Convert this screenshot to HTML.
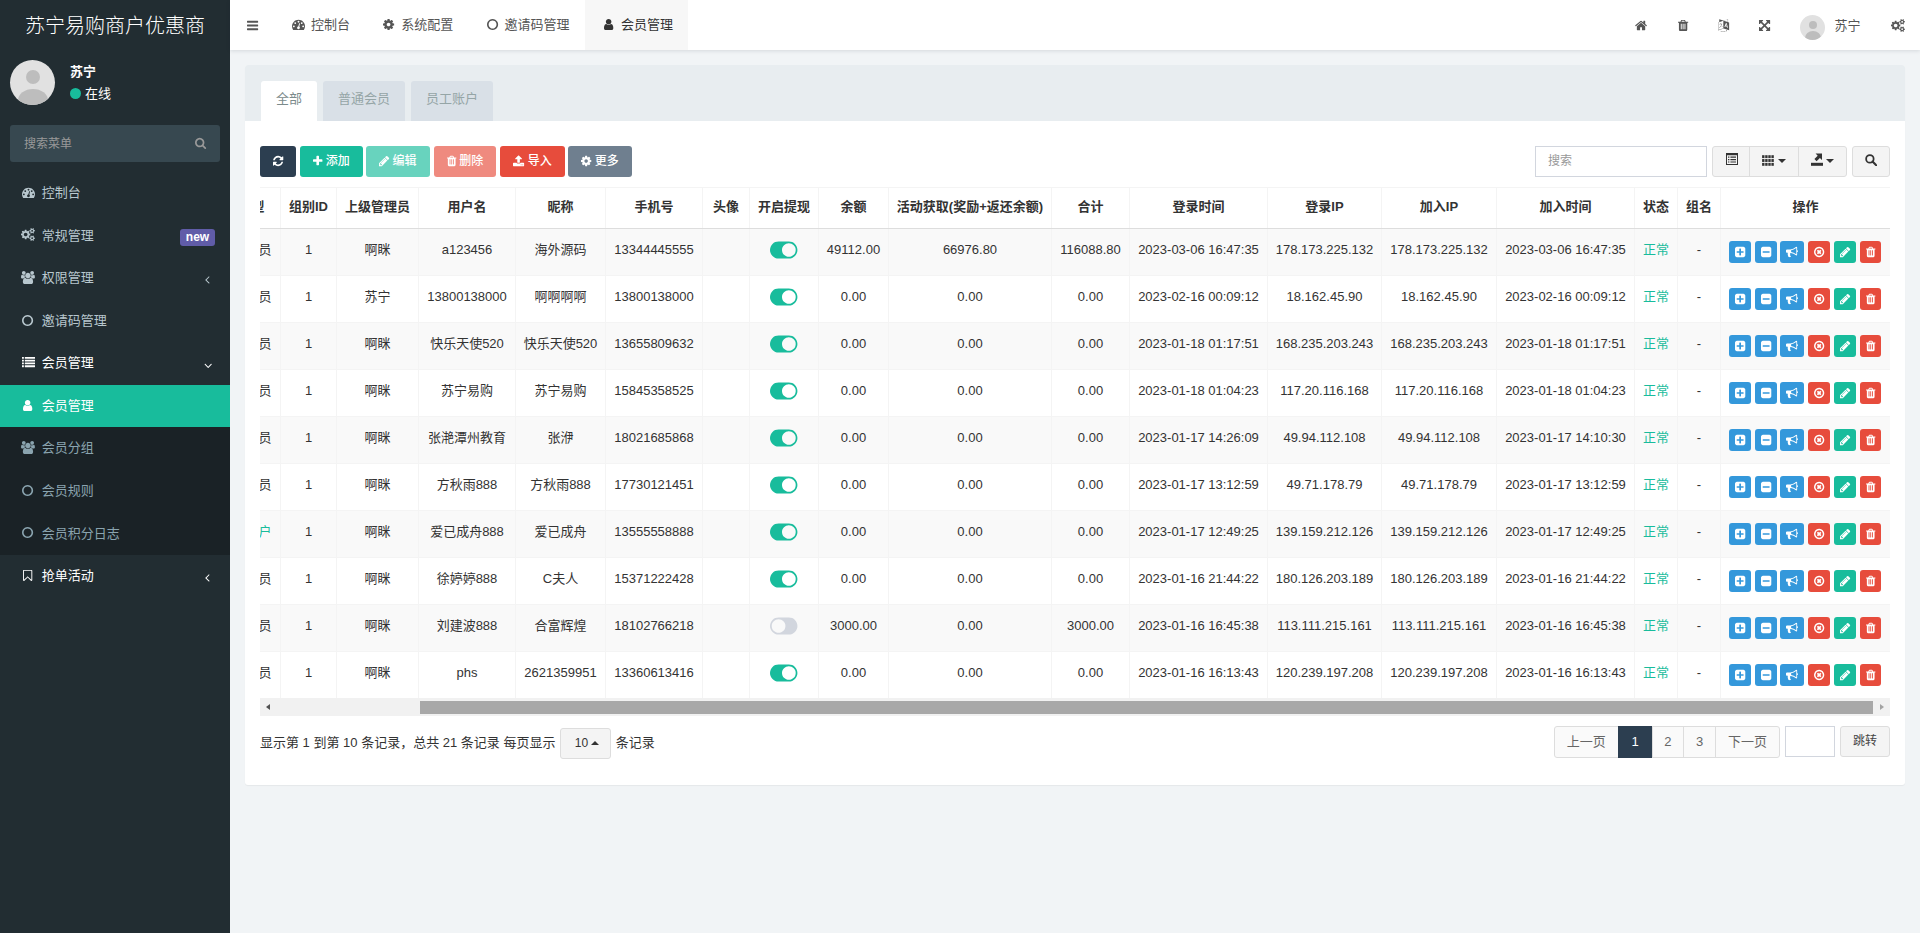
<!DOCTYPE html>
<html lang="zh-CN"><head><meta charset="utf-8"><title>会员管理</title>
<style>
*{box-sizing:border-box;margin:0;padding:0}
html,body{width:1920px;height:933px;overflow:hidden}
body{font-family:"Liberation Sans","Noto Sans CJK SC",sans-serif;font-size:13px;line-height:1.42857;color:#333;background:#f1f4f6;position:relative}
ul{list-style:none}
a{text-decoration:none;color:inherit}
svg.fa{display:inline-block;vertical-align:-0.143em;overflow:visible}
.fw{display:inline-block;text-align:center}
/* sidebar */
.sidebar{position:absolute;left:0;top:0;width:230px;height:933px;background:#222d32;color:#b8c7ce}
.logo{height:50px;line-height:52px;text-align:center;color:#fff;font-size:20px;font-weight:300;letter-spacing:0;white-space:nowrap}
.upanel{position:absolute;left:0;top:50px;width:230px;height:65px}
.avatar{position:absolute;border-radius:50%;background:#e1e1e1;overflow:hidden}
.avatar .hd{position:absolute;border-radius:50%;background:#bdbdbd}
.avatar .bd{position:absolute;border-radius:50%;background:#bdbdbd}
.av45{left:10px;top:10px;width:45px;height:45px}
.av45 .hd{left:15.5px;top:10.3px;width:14px;height:14px}
.av45 .bd{left:7.5px;top:28.6px;width:30px;height:23px}
.av25{left:1800px;top:15px;width:25px;height:25px}
.av25 .hd{left:8.5px;top:5.5px;width:8px;height:8px}
.av25 .bd{left:4.5px;top:15.5px;width:16px;height:14px}
.uname{position:absolute;left:70px;top:11.5px;color:#fff;font-weight:bold;font-size:13px;line-height:20px}
.ustat{position:absolute;left:70px;top:35px;color:#fff;font-size:13px;line-height:18px;padding-left:15px}
.ustat .dot{position:absolute;left:0;top:3px;width:11px;height:11px;border-radius:50%;background:#18bc9c}
.msearch{position:absolute;left:10px;top:125px;width:210px;height:37px;background:#374850;border-radius:3px}
.msearch .ph{position:absolute;left:14px;top:1px;line-height:37px;font-size:12px;color:#999}
.menu{position:absolute;left:0;top:172px;width:230px}
.mi{position:relative;height:42.57px;padding:12px 5px 12px 18px;line-height:18.57px;font-size:13px;white-space:nowrap;color:#b8c7ce}
.mi .fw{margin-right:0}
.mi .mt{margin-left:3.75px}
.mi.open,.mi.w{color:#fff}
.mi .pr{position:absolute;right:20px;top:14.5px}
.mi .pr.dn{right:17.8px;top:15px}
.sub{background:#1a2226}
.sub .mi{color:#8aa4af}
.sub .mi.active{background:#18bc9c;color:#fff}
.badge{position:absolute;left:180px;top:14px;height:17px;width:35px;background:#605ca8;color:#fff;font-weight:bold;font-size:12px;line-height:16px;text-align:center;border-radius:3px}
/* header */
.topbar{position:absolute;left:230px;top:0;width:1690px;height:50px;background:#fff;box-shadow:0 1px 4px rgba(0,21,41,.12)}
.topbar>*{position:absolute}
.burger{left:17px;top:0.6px;height:50px;display:flex;align-items:center}
.ntab{top:0;height:50px;line-height:50px;padding:0 15px;color:#555;white-space:nowrap;font-size:13px}
.ntab{margin-left:-230px}
.ntab .tt{margin-left:4px}
.ntab.active{background:#f7f7f7;color:#333}
.hi{top:0.4px;height:50px;display:flex;align-items:center;margin-left:-230px}
.topbar .av25{margin-left:-230px}
.hname{left:1604.5px;top:0.5px;line-height:50px;font-size:13px;color:#555}
/* panel */
.panel{position:absolute;left:245px;top:65px;width:1660px;height:720px;background:#fff;border-radius:3px;box-shadow:0 1px 1px rgba(0,0,0,.05)}
.phead{position:absolute;left:0;top:0;width:1660px;height:56px;background:#e8edf0;border-radius:3px 3px 0 0}
.ptab{position:absolute;top:16px;height:40px;line-height:36px;text-align:center;background:#d9e0e7;color:#95a5a6;border-radius:3px 3px 0 0;font-size:13px}
.ptab.active{background:#fff;color:#7b8a8b}
.tbar{position:absolute;left:-245px;top:-65px}
.btn{position:absolute;top:146px;height:31px;border-radius:3px;color:#fff;font-weight:500;font-size:12px;line-height:29px;text-align:center;white-space:nowrap;border:1px solid transparent}
.b-dark{background:#2c3e50}
.b-success{background:#18bc9c}
.b-danger{background:#e74c3c}
.b-info{background:#3498db}
.b-gray{background:#6f7f8f}
.dis{opacity:.65}
.sinput{position:absolute;left:1535px;top:146px;width:172px;height:31px;border:1px solid #d2d6de;border-radius:0;background:#fff}
.sinput span{position:absolute;left:12px;top:0;line-height:29px;font-size:12px;color:#999}
.bgroup{position:absolute;left:1712px;top:146px;width:135px;height:31px}
.gb{position:absolute;top:0;height:31px;background:#f4f4f4;border:1px solid #ddd;border-radius:3px}
.caret{position:absolute;top:11.5px;width:0;height:0;border-left:4px solid transparent;border-right:4px solid transparent;border-top:4px solid #333}
/* table */
.twrap{position:absolute;left:15px;top:122px;width:1630px;height:511px;overflow:hidden}
.tscroll{position:absolute;left:-50px;top:0;width:1680px}
table.grid{border-collapse:collapse;table-layout:fixed;width:1680px;font-size:13px;color:#333}
.grid th,.grid td{border:1px solid #f4f4f4;text-align:center;white-space:nowrap;overflow:hidden;vertical-align:middle}
.grid th{font-weight:bold;border-bottom:1px solid #ddd;padding:0}
.grid .thi{padding:8px 0;line-height:24px;position:relative;top:-0.7px}
.grid th.first .thi{text-align:right;padding-right:15.5px}
.grid td{padding:6.75px 0 9.25px;height:47px;line-height:18.57px}
.grid tbody tr:nth-child(odd) td{background:#f9f9f9}
.grid td.g{color:#18bc9c}
.grid td.tg{line-height:0;padding:0}
.grid td.tg svg{vertical-align:middle;position:relative;top:-1.8px}
.grid td.ops{font-size:0;line-height:0;padding:0}
.opsw{display:flex;align-items:center;padding-left:8px;height:22px}
.bx{display:flex;align-items:center;justify-content:center;width:22px;height:22px;border-radius:3px;margin-right:4px;flex:none}
.bx svg{vertical-align:0;display:block}
.hscroll{position:absolute;left:15px;top:633px;width:1630px;height:17.7px;background:#f1f1f1}
.hscroll .thumb{position:absolute;left:160px;top:3px;width:1453px;height:12.7px;background:#a8a8a8}
.hscroll .al{position:absolute;left:5.7px;top:6px;border-top:3.6px solid transparent;border-bottom:3.6px solid transparent;border-right:4.7px solid #505050}
.hscroll .ar{position:absolute;right:5.7px;top:6px;border-top:3.6px solid transparent;border-bottom:3.6px solid transparent;border-left:4.7px solid #a3a3a3}
.pinfo{position:absolute;left:15px;top:662px;height:31px;line-height:31px;font-size:13px;color:#333;white-space:nowrap}
.psize{display:inline-block;top:1px;width:51px;height:31px;border:1px solid #ddd;background:#f4f4f4;border-radius:3px;vertical-align:top;text-align:center;font-size:12px;line-height:29px;position:relative;margin:0 1px;padding-right:8px}
.caretup{position:absolute;left:30px;top:12px;border-left:4px solid transparent;border-right:4px solid transparent;border-bottom:4px solid #333}
.pager{position:absolute;left:1309px;top:661px;height:31.6px}
.pager a{position:absolute;top:0;height:31.6px;border:1px solid #ddd;background:#fafafa;color:#666;text-align:center;line-height:30px;font-size:13px}
.pager a.cur{background:#2c3e50;border-color:#2c3e50;color:#fff}
.jinput{position:absolute;left:1540px;top:661px;width:50px;height:30.6px;border:1px solid #d2d6de;background:#fff;border-radius:0}
.jbtn{position:absolute;left:1595px;top:661px;width:50px;height:30.6px;border:1px solid #ddd;background:#f4f4f4;border-radius:3px;font-size:12px;line-height:29px;text-align:center;color:#444}

.bx.w24{width:24px}
.bx.w21{width:21px;margin-right:0}
.bx.m3{margin-right:3px}

</style></head>
<body>

<aside class="sidebar">
  <div class="logo">苏宁易购商户优惠商</div>
  <div class="upanel">
    <div class="avatar av45"><i class="hd"></i><i class="bd"></i></div>
    <div class="uname">苏宁</div>
    <div class="ustat"><i class="dot"></i>在线</div>
  </div>
  <div class="msearch"><span class="ph">搜索菜单</span><svg class="fa" width="11.14" height="12" viewBox="0 -1536 1664 1792" style="fill:#999;position:absolute;left:185px;top:12px"><path transform="scale(1,-1)" d="M1152 704q0 185 -131.5 316.5t-316.5 131.5t-316.5 -131.5t-131.5 -316.5t131.5 -316.5t316.5 -131.5t316.5 131.5t131.5 316.5zM1664 -128q0 -52 -38 -90t-90 -38q-54 0 -90 38l-343 342q-179 -124 -399 -124q-143 0 -273.5 55.5t-225 150t-150 225t-55.5 273.5 t55.5 273.5t150 225t225 150t273.5 55.5t273.5 -55.5t225 -150t150 -225t55.5 -273.5q0 -220 -124 -399l343 -343q37 -37 37 -90z"/></svg></div>
  <ul class="menu">
    <li class="mi "><span class="fw" style="width:16.71px;width:20px"><svg class="fa" width="13.00" height="13" viewBox="0 -1536 1792 1792" style="fill:currentColor;"><path transform="scale(1,-1)" d="M384 384q0 53 -37.5 90.5t-90.5 37.5t-90.5 -37.5t-37.5 -90.5t37.5 -90.5t90.5 -37.5t90.5 37.5t37.5 90.5zM576 832q0 53 -37.5 90.5t-90.5 37.5t-90.5 -37.5t-37.5 -90.5t37.5 -90.5t90.5 -37.5t90.5 37.5t37.5 90.5zM1004 351l101 382q6 26 -7.5 48.5t-38.5 29.5 t-48 -6.5t-30 -39.5l-101 -382q-60 -5 -107 -43.5t-63 -98.5q-20 -77 20 -146t117 -89t146 20t89 117q16 60 -6 117t-72 91zM1664 384q0 53 -37.5 90.5t-90.5 37.5t-90.5 -37.5t-37.5 -90.5t37.5 -90.5t90.5 -37.5t90.5 37.5t37.5 90.5zM1024 1024q0 53 -37.5 90.5 t-90.5 37.5t-90.5 -37.5t-37.5 -90.5t37.5 -90.5t90.5 -37.5t90.5 37.5t37.5 90.5zM1472 832q0 53 -37.5 90.5t-90.5 37.5t-90.5 -37.5t-37.5 -90.5t37.5 -90.5t90.5 -37.5t90.5 37.5t37.5 90.5zM1792 384q0 -261 -141 -483q-19 -29 -54 -29h-1402q-35 0 -54 29 q-141 221 -141 483q0 182 71 348t191 286t286 191t348 71t348 -71t286 -191t191 -286t71 -348z"/></svg></span><span class="mt">控制台</span></li>
    <li class="mi "><span class="fw" style="width:16.71px;width:20px"><svg class="fa" width="13.93" height="13" viewBox="0 -1536 1920 1792" style="fill:currentColor;"><path transform="scale(1,-1)" d="M896 640q0 106 -75 181t-181 75t-181 -75t-75 -181t75 -181t181 -75t181 75t75 181zM1664 128q0 52 -38 90t-90 38t-90 -38t-38 -90q0 -53 37.5 -90.5t90.5 -37.5t90.5 37.5t37.5 90.5zM1664 1152q0 52 -38 90t-90 38t-90 -38t-38 -90q0 -53 37.5 -90.5t90.5 -37.5 t90.5 37.5t37.5 90.5zM1280 731v-185q0 -10 -7 -19.5t-16 -10.5l-155 -24q-11 -35 -32 -76q34 -48 90 -115q7 -11 7 -20q0 -12 -7 -19q-23 -30 -82.5 -89.5t-78.5 -59.5q-11 0 -21 7l-115 90q-37 -19 -77 -31q-11 -108 -23 -155q-7 -24 -30 -24h-186q-11 0 -20 7.5t-10 17.5 l-23 153q-34 10 -75 31l-118 -89q-7 -7 -20 -7q-11 0 -21 8q-144 133 -144 160q0 9 7 19q10 14 41 53t47 61q-23 44 -35 82l-152 24q-10 1 -17 9.5t-7 19.5v185q0 10 7 19.5t16 10.5l155 24q11 35 32 76q-34 48 -90 115q-7 11 -7 20q0 12 7 20q22 30 82 89t79 59q11 0 21 -7 l115 -90q34 18 77 32q11 108 23 154q7 24 30 24h186q11 0 20 -7.5t10 -17.5l23 -153q34 -10 75 -31l118 89q8 7 20 7q11 0 21 -8q144 -133 144 -160q0 -8 -7 -19q-12 -16 -42 -54t-45 -60q23 -48 34 -82l152 -23q10 -2 17 -10.5t7 -19.5zM1920 198v-140q0 -16 -149 -31 q-12 -27 -30 -52q51 -113 51 -138q0 -4 -4 -7q-122 -71 -124 -71q-8 0 -46 47t-52 68q-20 -2 -30 -2t-30 2q-14 -21 -52 -68t-46 -47q-2 0 -124 71q-4 3 -4 7q0 25 51 138q-18 25 -30 52q-149 15 -149 31v140q0 16 149 31q13 29 30 52q-51 113 -51 138q0 4 4 7q4 2 35 20 t59 34t30 16q8 0 46 -46.5t52 -67.5q20 2 30 2t30 -2q51 71 92 112l6 2q4 0 124 -70q4 -3 4 -7q0 -25 -51 -138q17 -23 30 -52q149 -15 149 -31zM1920 1222v-140q0 -16 -149 -31q-12 -27 -30 -52q51 -113 51 -138q0 -4 -4 -7q-122 -71 -124 -71q-8 0 -46 47t-52 68 q-20 -2 -30 -2t-30 2q-14 -21 -52 -68t-46 -47q-2 0 -124 71q-4 3 -4 7q0 25 51 138q-18 25 -30 52q-149 15 -149 31v140q0 16 149 31q13 29 30 52q-51 113 -51 138q0 4 4 7q4 2 35 20t59 34t30 16q8 0 46 -46.5t52 -67.5q20 2 30 2t30 -2q51 71 92 112l6 2q4 0 124 -70 q4 -3 4 -7q0 -25 -51 -138q17 -23 30 -52q149 -15 149 -31z"/></svg></span><span class="mt">常规管理</span><span class="badge">new</span></li>
    <li class="mi "><span class="fw" style="width:16.71px;width:20px"><svg class="fa" width="13.93" height="13" viewBox="0 -1536 1920 1792" style="fill:currentColor;"><path transform="scale(1,-1)" d="M593 640q-162 -5 -265 -128h-134q-82 0 -138 40.5t-56 118.5q0 353 124 353q6 0 43.5 -21t97.5 -42.5t119 -21.5q67 0 133 23q-5 -37 -5 -66q0 -139 81 -256zM1664 3q0 -120 -73 -189.5t-194 -69.5h-874q-121 0 -194 69.5t-73 189.5q0 53 3.5 103.5t14 109t26.5 108.5 t43 97.5t62 81t85.5 53.5t111.5 20q10 0 43 -21.5t73 -48t107 -48t135 -21.5t135 21.5t107 48t73 48t43 21.5q61 0 111.5 -20t85.5 -53.5t62 -81t43 -97.5t26.5 -108.5t14 -109t3.5 -103.5zM640 1280q0 -106 -75 -181t-181 -75t-181 75t-75 181t75 181t181 75t181 -75 t75 -181zM1344 896q0 -159 -112.5 -271.5t-271.5 -112.5t-271.5 112.5t-112.5 271.5t112.5 271.5t271.5 112.5t271.5 -112.5t112.5 -271.5zM1920 671q0 -78 -56 -118.5t-138 -40.5h-134q-103 123 -265 128q81 117 81 256q0 29 -5 66q66 -23 133 -23q59 0 119 21.5t97.5 42.5 t43.5 21q124 0 124 -353zM1792 1280q0 -106 -75 -181t-181 -75t-181 75t-75 181t75 181t181 75t181 -75t75 -181z"/></svg></span><span class="mt">权限管理</span><span class="pr"><svg class="fa" width="4.64" height="13" viewBox="0 -1536 640 1792" style="fill:currentColor;"><path transform="scale(1,-1)" d="M627 992q0 -13 -10 -23l-393 -393l393 -393q10 -10 10 -23t-10 -23l-50 -50q-10 -10 -23 -10t-23 10l-466 466q-10 10 -10 23t10 23l466 466q10 10 23 10t23 -10l50 -50q10 -10 10 -23z"/></svg></span></li>
    <li class="mi "><span class="fw" style="width:16.71px;width:20px"><svg class="fa" width="11.14" height="13" viewBox="0 -1536 1536 1792" style="fill:currentColor;"><path transform="scale(1,-1)" d="M768 1184q-148 0 -273 -73t-198 -198t-73 -273t73 -273t198 -198t273 -73t273 73t198 198t73 273t-73 273t-198 198t-273 73zM1536 640q0 -209 -103 -385.5t-279.5 -279.5t-385.5 -103t-385.5 103t-279.5 279.5t-103 385.5t103 385.5t279.5 279.5t385.5 103t385.5 -103 t279.5 -279.5t103 -385.5z"/></svg></span><span class="mt">邀请码管理</span></li>
    <li class="mi open"><span class="fw" style="width:16.71px;width:20px"><svg class="fa" width="13.00" height="13" viewBox="0 -1536 1792 1792" style="fill:currentColor;"><path transform="scale(1,-1)" d="M256 224v-192q0 -13 -9.5 -22.5t-22.5 -9.5h-192q-13 0 -22.5 9.5t-9.5 22.5v192q0 13 9.5 22.5t22.5 9.5h192q13 0 22.5 -9.5t9.5 -22.5zM256 608v-192q0 -13 -9.5 -22.5t-22.5 -9.5h-192q-13 0 -22.5 9.5t-9.5 22.5v192q0 13 9.5 22.5t22.5 9.5h192q13 0 22.5 -9.5 t9.5 -22.5zM256 992v-192q0 -13 -9.5 -22.5t-22.5 -9.5h-192q-13 0 -22.5 9.5t-9.5 22.5v192q0 13 9.5 22.5t22.5 9.5h192q13 0 22.5 -9.5t9.5 -22.5zM1792 224v-192q0 -13 -9.5 -22.5t-22.5 -9.5h-1344q-13 0 -22.5 9.5t-9.5 22.5v192q0 13 9.5 22.5t22.5 9.5h1344 q13 0 22.5 -9.5t9.5 -22.5zM256 1376v-192q0 -13 -9.5 -22.5t-22.5 -9.5h-192q-13 0 -22.5 9.5t-9.5 22.5v192q0 13 9.5 22.5t22.5 9.5h192q13 0 22.5 -9.5t9.5 -22.5zM1792 608v-192q0 -13 -9.5 -22.5t-22.5 -9.5h-1344q-13 0 -22.5 9.5t-9.5 22.5v192q0 13 9.5 22.5 t22.5 9.5h1344q13 0 22.5 -9.5t9.5 -22.5zM1792 992v-192q0 -13 -9.5 -22.5t-22.5 -9.5h-1344q-13 0 -22.5 9.5t-9.5 22.5v192q0 13 9.5 22.5t22.5 9.5h1344q13 0 22.5 -9.5t9.5 -22.5zM1792 1376v-192q0 -13 -9.5 -22.5t-22.5 -9.5h-1344q-13 0 -22.5 9.5t-9.5 22.5v192 q0 13 9.5 22.5t22.5 9.5h1344q13 0 22.5 -9.5t9.5 -22.5z"/></svg></span><span class="mt">会员管理</span><span class="pr dn"><svg class="fa" width="8.36" height="13" viewBox="0 -1536 1152 1792" style="fill:currentColor;"><path transform="scale(1,-1)" d="M1075 800q0 -13 -10 -23l-466 -466q-10 -10 -23 -10t-23 10l-466 466q-10 10 -10 23t10 23l50 50q10 10 23 10t23 -10l393 -393l393 393q10 10 23 10t23 -10l50 -50q10 -10 10 -23z"/></svg></span></li>
    <li class="subw"><ul class="sub">
      <li class="mi active"><span class="fw" style="width:16.71px;width:20px"><svg class="fa" width="9.29" height="13" viewBox="0 -1536 1280 1792" style="fill:currentColor;"><path transform="scale(1,-1)" d="M1280 137q0 -109 -62.5 -187t-150.5 -78h-854q-88 0 -150.5 78t-62.5 187q0 85 8.5 160.5t31.5 152t58.5 131t94 89t134.5 34.5q131 -128 313 -128t313 128q76 0 134.5 -34.5t94 -89t58.5 -131t31.5 -152t8.5 -160.5zM1024 1024q0 -159 -112.5 -271.5t-271.5 -112.5 t-271.5 112.5t-112.5 271.5t112.5 271.5t271.5 112.5t271.5 -112.5t112.5 -271.5z"/></svg></span><span class="mt">会员管理</span></li>
      <li class="mi s"><span class="fw" style="width:16.71px;width:20px"><svg class="fa" width="13.93" height="13" viewBox="0 -1536 1920 1792" style="fill:currentColor;"><path transform="scale(1,-1)" d="M593 640q-162 -5 -265 -128h-134q-82 0 -138 40.5t-56 118.5q0 353 124 353q6 0 43.5 -21t97.5 -42.5t119 -21.5q67 0 133 23q-5 -37 -5 -66q0 -139 81 -256zM1664 3q0 -120 -73 -189.5t-194 -69.5h-874q-121 0 -194 69.5t-73 189.5q0 53 3.5 103.5t14 109t26.5 108.5 t43 97.5t62 81t85.5 53.5t111.5 20q10 0 43 -21.5t73 -48t107 -48t135 -21.5t135 21.5t107 48t73 48t43 21.5q61 0 111.5 -20t85.5 -53.5t62 -81t43 -97.5t26.5 -108.5t14 -109t3.5 -103.5zM640 1280q0 -106 -75 -181t-181 -75t-181 75t-75 181t75 181t181 75t181 -75 t75 -181zM1344 896q0 -159 -112.5 -271.5t-271.5 -112.5t-271.5 112.5t-112.5 271.5t112.5 271.5t271.5 112.5t271.5 -112.5t112.5 -271.5zM1920 671q0 -78 -56 -118.5t-138 -40.5h-134q-103 123 -265 128q81 117 81 256q0 29 -5 66q66 -23 133 -23q59 0 119 21.5t97.5 42.5 t43.5 21q124 0 124 -353zM1792 1280q0 -106 -75 -181t-181 -75t-181 75t-75 181t75 181t181 75t181 -75t75 -181z"/></svg></span><span class="mt">会员分组</span></li>
      <li class="mi s"><span class="fw" style="width:16.71px;width:20px"><svg class="fa" width="11.14" height="13" viewBox="0 -1536 1536 1792" style="fill:currentColor;"><path transform="scale(1,-1)" d="M768 1184q-148 0 -273 -73t-198 -198t-73 -273t73 -273t198 -198t273 -73t273 73t198 198t73 273t-73 273t-198 198t-273 73zM1536 640q0 -209 -103 -385.5t-279.5 -279.5t-385.5 -103t-385.5 103t-279.5 279.5t-103 385.5t103 385.5t279.5 279.5t385.5 103t385.5 -103 t279.5 -279.5t103 -385.5z"/></svg></span><span class="mt">会员规则</span></li>
      <li class="mi s"><span class="fw" style="width:16.71px;width:20px"><svg class="fa" width="11.14" height="13" viewBox="0 -1536 1536 1792" style="fill:currentColor;"><path transform="scale(1,-1)" d="M768 1184q-148 0 -273 -73t-198 -198t-73 -273t73 -273t198 -198t273 -73t273 73t198 198t73 273t-73 273t-198 198t-273 73zM1536 640q0 -209 -103 -385.5t-279.5 -279.5t-385.5 -103t-385.5 103t-279.5 279.5t-103 385.5t103 385.5t279.5 279.5t385.5 103t385.5 -103 t279.5 -279.5t103 -385.5z"/></svg></span><span class="mt">会员积分日志</span></li>
    </ul></li>
    <li class="mi w"><span class="fw" style="width:16.71px;width:20px"><svg class="fa" width="9.29" height="13" viewBox="0 -1536 1280 1792" style="fill:currentColor;"><path transform="scale(1,-1)" d="M1152 1280h-1024v-1242l423 406l89 85l89 -85l423 -406v1242zM1164 1408q23 0 44 -9q33 -13 52.5 -41t19.5 -62v-1289q0 -34 -19.5 -62t-52.5 -41q-19 -8 -44 -8q-48 0 -83 32l-441 424l-441 -424q-36 -33 -83 -33q-23 0 -44 9q-33 13 -52.5 41t-19.5 62v1289 q0 34 19.5 62t52.5 41q21 9 44 9h1048z"/></svg></span><span class="mt">抢单活动</span><span class="pr"><svg class="fa" width="4.64" height="13" viewBox="0 -1536 640 1792" style="fill:currentColor;"><path transform="scale(1,-1)" d="M627 992q0 -13 -10 -23l-393 -393l393 -393q10 -10 10 -23t-10 -23l-50 -50q-10 -10 -23 -10t-23 10l-466 466q-10 10 -10 23t10 23l466 466q10 10 23 10t23 -10l50 -50q10 -10 10 -23z"/></svg></span></li>
  </ul>
</aside>


<header class="topbar">
  <div class="burger"><svg class="fa" width="11.14" height="13" viewBox="0 -1536 1536 1792" style="fill:#555;"><path transform="scale(1,-1)" d="M1536 192v-128q0 -26 -19 -45t-45 -19h-1408q-26 0 -45 19t-19 45v128q0 26 19 45t45 19h1408q26 0 45 -19t19 -45zM1536 704v-128q0 -26 -19 -45t-45 -19h-1408q-26 0 -45 19t-19 45v128q0 26 19 45t45 19h1408q26 0 45 -19t19 -45zM1536 1216v-128q0 -26 -19 -45 t-45 -19h-1408q-26 0 -45 19t-19 45v128q0 26 19 45t45 19h1408q26 0 45 -19t19 -45z"/></svg></div>
  <div class="ntab " style="left:275.3px;width:90.3px"><span class="fw" style="width:16.71px;"><svg class="fa" width="13.00" height="13" viewBox="0 -1536 1792 1792" style="fill:currentColor;"><path transform="scale(1,-1)" d="M384 384q0 53 -37.5 90.5t-90.5 37.5t-90.5 -37.5t-37.5 -90.5t37.5 -90.5t90.5 -37.5t90.5 37.5t37.5 90.5zM576 832q0 53 -37.5 90.5t-90.5 37.5t-90.5 -37.5t-37.5 -90.5t37.5 -90.5t90.5 -37.5t90.5 37.5t37.5 90.5zM1004 351l101 382q6 26 -7.5 48.5t-38.5 29.5 t-48 -6.5t-30 -39.5l-101 -382q-60 -5 -107 -43.5t-63 -98.5q-20 -77 20 -146t117 -89t146 20t89 117q16 60 -6 117t-72 91zM1664 384q0 53 -37.5 90.5t-90.5 37.5t-90.5 -37.5t-37.5 -90.5t37.5 -90.5t90.5 -37.5t90.5 37.5t37.5 90.5zM1024 1024q0 53 -37.5 90.5 t-90.5 37.5t-90.5 -37.5t-37.5 -90.5t37.5 -90.5t90.5 -37.5t90.5 37.5t37.5 90.5zM1472 832q0 53 -37.5 90.5t-90.5 37.5t-90.5 -37.5t-37.5 -90.5t37.5 -90.5t90.5 -37.5t90.5 37.5t37.5 90.5zM1792 384q0 -261 -141 -483q-19 -29 -54 -29h-1402q-35 0 -54 29 q-141 221 -141 483q0 182 71 348t191 286t286 191t348 71t348 -71t286 -191t191 -286t71 -348z"/></svg></span><span class="tt">控制台</span></div>
  <div class="ntab " style="left:365.6px;width:103.3px"><span class="fw" style="width:16.71px;"><svg class="fa" width="11.14" height="13" viewBox="0 -1536 1536 1792" style="fill:currentColor;"><path transform="scale(1,-1)" d="M1024 640q0 106 -75 181t-181 75t-181 -75t-75 -181t75 -181t181 -75t181 75t75 181zM1536 749v-222q0 -12 -8 -23t-20 -13l-185 -28q-19 -54 -39 -91q35 -50 107 -138q10 -12 10 -25t-9 -23q-27 -37 -99 -108t-94 -71q-12 0 -26 9l-138 108q-44 -23 -91 -38 q-16 -136 -29 -186q-7 -28 -36 -28h-222q-14 0 -24.5 8.5t-11.5 21.5l-28 184q-49 16 -90 37l-141 -107q-10 -9 -25 -9q-14 0 -25 11q-126 114 -165 168q-7 10 -7 23q0 12 8 23q15 21 51 66.5t54 70.5q-27 50 -41 99l-183 27q-13 2 -21 12.5t-8 23.5v222q0 12 8 23t19 13 l186 28q14 46 39 92q-40 57 -107 138q-10 12 -10 24q0 10 9 23q26 36 98.5 107.5t94.5 71.5q13 0 26 -10l138 -107q44 23 91 38q16 136 29 186q7 28 36 28h222q14 0 24.5 -8.5t11.5 -21.5l28 -184q49 -16 90 -37l142 107q9 9 24 9q13 0 25 -10q129 -119 165 -170q7 -8 7 -22 q0 -12 -8 -23q-15 -21 -51 -66.5t-54 -70.5q26 -50 41 -98l183 -28q13 -2 21 -12.5t8 -23.5z"/></svg></span><span class="tt">系统配置</span></div>
  <div class="ntab " style="left:468.9px;width:116.3px"><span class="fw" style="width:16.71px;"><svg class="fa" width="11.14" height="13" viewBox="0 -1536 1536 1792" style="fill:currentColor;"><path transform="scale(1,-1)" d="M768 1184q-148 0 -273 -73t-198 -198t-73 -273t73 -273t198 -198t273 -73t273 73t198 198t73 273t-73 273t-198 198t-273 73zM1536 640q0 -209 -103 -385.5t-279.5 -279.5t-385.5 -103t-385.5 103t-279.5 279.5t-103 385.5t103 385.5t279.5 279.5t385.5 103t385.5 -103 t279.5 -279.5t103 -385.5z"/></svg></span><span class="tt">邀请码管理</span></div>
  <div class="ntab active" style="left:585.2px;width:102.6px"><span class="fw" style="width:16.71px;"><svg class="fa" width="9.29" height="13" viewBox="0 -1536 1280 1792" style="fill:currentColor;"><path transform="scale(1,-1)" d="M1280 137q0 -109 -62.5 -187t-150.5 -78h-854q-88 0 -150.5 78t-62.5 187q0 85 8.5 160.5t31.5 152t58.5 131t94 89t134.5 34.5q131 -128 313 -128t313 128q76 0 134.5 -34.5t94 -89t58.5 -131t31.5 -152t8.5 -160.5zM1024 1024q0 -159 -112.5 -271.5t-271.5 -112.5 t-271.5 112.5t-112.5 271.5t112.5 271.5t271.5 112.5t271.5 -112.5t112.5 -271.5z"/></svg></span><span class="tt">会员管理</span></div>
  <div class="hi" style="left:1634.8px"><svg class="fa" width="12.07" height="13" viewBox="0 -1536 1664 1792" style="fill:#555;"><path transform="scale(1,-1)" d="M1408 544v-480q0 -26 -19 -45t-45 -19h-384v384h-256v-384h-384q-26 0 -45 19t-19 45v480q0 1 0.5 3t0.5 3l575 474l575 -474q1 -2 1 -6zM1631 613l-62 -74q-8 -9 -21 -11h-3q-13 0 -21 7l-692 577l-692 -577q-12 -8 -24 -7q-13 2 -21 11l-62 74q-8 10 -7 23.5t11 21.5 l719 599q32 26 76 26t76 -26l244 -204v195q0 14 9 23t23 9h192q14 0 23 -9t9 -23v-408l219 -182q10 -8 11 -21.5t-7 -23.5z"/></svg></div>
  <div class="hi" style="left:1677.6px"><svg class="fa" width="10.21" height="13" viewBox="0 -1536 1408 1792" style="fill:#555;"><path transform="scale(1,-1)" d="M512 160v704q0 14 -9 23t-23 9h-64q-14 0 -23 -9t-9 -23v-704q0 -14 9 -23t23 -9h64q14 0 23 9t9 23zM768 160v704q0 14 -9 23t-23 9h-64q-14 0 -23 -9t-9 -23v-704q0 -14 9 -23t23 -9h64q14 0 23 9t9 23zM1024 160v704q0 14 -9 23t-23 9h-64q-14 0 -23 -9t-9 -23v-704 q0 -14 9 -23t23 -9h64q14 0 23 9t9 23zM480 1152h448l-48 117q-7 9 -17 11h-317q-10 -2 -17 -11zM1408 1120v-64q0 -14 -9 -23t-23 -9h-96v-948q0 -83 -47 -143.5t-113 -60.5h-832q-66 0 -113 58.5t-47 141.5v952h-96q-14 0 -23 9t-9 23v64q0 14 9 23t23 9h309l70 167 q15 37 54 63t79 26h320q40 0 79 -26t54 -63l70 -167h309q14 0 23 -9t9 -23z"/></svg></div>
  <div class="hi" style="left:1717.8px"><svg class="fa" width="11.14" height="13" viewBox="0 -1536 1536 1792" style="fill:#555;"><path transform="scale(1,-1)" d="M654 458q-1 -3 -12.5 0.5t-31.5 11.5l-20 9q-44 20 -87 49q-7 5 -41 31.5t-38 28.5q-67 -103 -134 -181q-81 -95 -105 -110q-4 -2 -19.5 -4t-18.5 0q6 4 82 92q21 24 85.5 115t78.5 118q17 30 51 98.5t36 77.5q-8 1 -110 -33q-8 -2 -27.5 -7.5t-34.5 -9.5t-17 -5 q-2 -2 -2 -10.5t-1 -9.5q-5 -10 -31 -15q-23 -7 -47 0q-18 4 -28 21q-4 6 -5 23q6 2 24.5 5t29.5 6q58 16 105 32q100 35 102 35q10 2 43 19.5t44 21.5q9 3 21.5 8t14.5 5.5t6 -0.5q2 -12 -1 -33q0 -2 -12.5 -27t-26.5 -53.5t-17 -33.5q-25 -50 -77 -131l64 -28 q12 -6 74.5 -32t67.5 -28q4 -1 10.5 -25.5t4.5 -30.5zM449 944q3 -15 -4 -28q-12 -23 -50 -38q-30 -12 -60 -12q-26 3 -49 26q-14 15 -18 41l1 3q3 -3 19.5 -5t26.5 0t58 16q36 12 55 14q17 0 21 -17zM1147 815l63 -227l-139 42zM39 15l694 232v1032l-694 -233v-1031z M1280 332l102 -31l-181 657l-100 31l-216 -536l102 -31l45 110l211 -65zM777 1294l573 -184v380zM1088 -29l158 -13l-54 -160l-40 66q-130 -83 -276 -108q-58 -12 -91 -12h-84q-79 0 -199.5 39t-183.5 85q-8 7 -8 16q0 8 5 13.5t13 5.5q4 0 18 -7.5t30.5 -16.5t20.5 -11 q73 -37 159.5 -61.5t157.5 -24.5q95 0 167 14.5t157 50.5q15 7 30.5 15.5t34 19t28.5 16.5zM1536 1050v-1079l-774 246q-14 -6 -375 -127.5t-368 -121.5q-13 0 -18 13q0 1 -1 3v1078q3 9 4 10q5 6 20 11q107 36 149 50v384l558 -198q2 0 160.5 55t316 108.5t161.5 53.5 q20 0 20 -21v-418z"/></svg></div>
  <div class="hi" style="left:1759px"><svg class="fa" width="11.14" height="13" viewBox="0 -1536 1536 1792" style="fill:#555;"><path transform="scale(1,-1)" d="M1283 995l-355 -355l355 -355l144 144q29 31 70 14q39 -17 39 -59v-448q0 -26 -19 -45t-45 -19h-448q-42 0 -59 40q-17 39 14 69l144 144l-355 355l-355 -355l144 -144q31 -30 14 -69q-17 -40 -59 -40h-448q-26 0 -45 19t-19 45v448q0 42 40 59q39 17 69 -14l144 -144 l355 355l-355 355l-144 -144q-19 -19 -45 -19q-12 0 -24 5q-40 17 -40 59v448q0 26 19 45t45 19h448q42 0 59 -40q17 -39 -14 -69l-144 -144l355 -355l355 355l-144 144q-31 30 -14 69q17 40 59 40h448q26 0 45 -19t19 -45v-448q0 -42 -39 -59q-13 -5 -25 -5q-26 0 -45 19z "/></svg></div>
  <div class="avatar av25"><i class="hd"></i><i class="bd"></i></div>
  <div class="hname">苏宁</div>
  <div class="hi" style="left:1890.9px"><svg class="fa" width="13.93" height="13" viewBox="0 -1536 1920 1792" style="fill:#555;"><path transform="scale(1,-1)" d="M896 640q0 106 -75 181t-181 75t-181 -75t-75 -181t75 -181t181 -75t181 75t75 181zM1664 128q0 52 -38 90t-90 38t-90 -38t-38 -90q0 -53 37.5 -90.5t90.5 -37.5t90.5 37.5t37.5 90.5zM1664 1152q0 52 -38 90t-90 38t-90 -38t-38 -90q0 -53 37.5 -90.5t90.5 -37.5 t90.5 37.5t37.5 90.5zM1280 731v-185q0 -10 -7 -19.5t-16 -10.5l-155 -24q-11 -35 -32 -76q34 -48 90 -115q7 -11 7 -20q0 -12 -7 -19q-23 -30 -82.5 -89.5t-78.5 -59.5q-11 0 -21 7l-115 90q-37 -19 -77 -31q-11 -108 -23 -155q-7 -24 -30 -24h-186q-11 0 -20 7.5t-10 17.5 l-23 153q-34 10 -75 31l-118 -89q-7 -7 -20 -7q-11 0 -21 8q-144 133 -144 160q0 9 7 19q10 14 41 53t47 61q-23 44 -35 82l-152 24q-10 1 -17 9.5t-7 19.5v185q0 10 7 19.5t16 10.5l155 24q11 35 32 76q-34 48 -90 115q-7 11 -7 20q0 12 7 20q22 30 82 89t79 59q11 0 21 -7 l115 -90q34 18 77 32q11 108 23 154q7 24 30 24h186q11 0 20 -7.5t10 -17.5l23 -153q34 -10 75 -31l118 89q8 7 20 7q11 0 21 -8q144 -133 144 -160q0 -8 -7 -19q-12 -16 -42 -54t-45 -60q23 -48 34 -82l152 -23q10 -2 17 -10.5t7 -19.5zM1920 198v-140q0 -16 -149 -31 q-12 -27 -30 -52q51 -113 51 -138q0 -4 -4 -7q-122 -71 -124 -71q-8 0 -46 47t-52 68q-20 -2 -30 -2t-30 2q-14 -21 -52 -68t-46 -47q-2 0 -124 71q-4 3 -4 7q0 25 51 138q-18 25 -30 52q-149 15 -149 31v140q0 16 149 31q13 29 30 52q-51 113 -51 138q0 4 4 7q4 2 35 20 t59 34t30 16q8 0 46 -46.5t52 -67.5q20 2 30 2t30 -2q51 71 92 112l6 2q4 0 124 -70q4 -3 4 -7q0 -25 -51 -138q17 -23 30 -52q149 -15 149 -31zM1920 1222v-140q0 -16 -149 -31q-12 -27 -30 -52q51 -113 51 -138q0 -4 -4 -7q-122 -71 -124 -71q-8 0 -46 47t-52 68 q-20 -2 -30 -2t-30 2q-14 -21 -52 -68t-46 -47q-2 0 -124 71q-4 3 -4 7q0 25 51 138q-18 25 -30 52q-149 15 -149 31v140q0 16 149 31q13 29 30 52q-51 113 -51 138q0 4 4 7q4 2 35 20t59 34t30 16q8 0 46 -46.5t52 -67.5q20 2 30 2t30 -2q51 71 92 112l6 2q4 0 124 -70 q4 -3 4 -7q0 -25 -51 -138q17 -23 30 -52q149 -15 149 -31z"/></svg></div>
</header>


<div class="panel">
  <div class="phead">
    <div class="ptab active" style="left:16px;width:56px">全部</div>
    <div class="ptab" style="left:78px;width:82px">普通会员</div>
    <div class="ptab" style="left:166px;width:82px">员工账户</div>
  </div>
  <div class="tbar">
    <a class="btn b-dark" style="left:260px;width:36px"><svg class="fa" width="10.29" height="12" viewBox="0 -1536 1536 1792" style="fill:#fff;"><path transform="scale(1,-1)" d="M1511 480q0 -5 -1 -7q-64 -268 -268 -434.5t-478 -166.5q-146 0 -282.5 55t-243.5 157l-129 -129q-19 -19 -45 -19t-45 19t-19 45v448q0 26 19 45t45 19h448q26 0 45 -19t19 -45t-19 -45l-137 -137q71 -66 161 -102t187 -36q134 0 250 65t186 179q11 17 53 117 q8 23 30 23h192q13 0 22.5 -9.5t9.5 -22.5zM1536 1280v-448q0 -26 -19 -45t-45 -19h-448q-26 0 -45 19t-19 45t19 45l138 138q-148 137 -349 137q-134 0 -250 -65t-186 -179q-11 -17 -53 -117q-8 -23 -30 -23h-199q-13 0 -22.5 9.5t-9.5 22.5v7q65 268 270 434.5t480 166.5 q146 0 284 -55.5t245 -156.5l130 129q19 19 45 19t45 -19t19 -45z"/></svg></a>
    <a class="btn b-success" style="left:300px;width:63px"><svg class="fa" width="9.43" height="12" viewBox="0 -1536 1408 1792" style="fill:#fff;"><path transform="scale(1,-1)" d="M1408 800v-192q0 -40 -28 -68t-68 -28h-416v-416q0 -40 -28 -68t-68 -28h-192q-40 0 -68 28t-28 68v416h-416q-40 0 -68 28t-28 68v192q0 40 28 68t68 28h416v416q0 40 28 68t68 28h192q40 0 68 -28t28 -68v-416h416q40 0 68 -28t28 -68z"/></svg> 添加</a>
    <a class="btn b-success dis" style="left:366px;width:63.6px"><svg class="fa" width="10.29" height="12" viewBox="0 -1536 1536 1792" style="fill:#fff;"><path transform="scale(1,-1)" d="M363 0l91 91l-235 235l-91 -91v-107h128v-128h107zM886 928q0 22 -22 22q-10 0 -17 -7l-542 -542q-7 -7 -7 -17q0 -22 22 -22q10 0 17 7l542 542q7 7 7 17zM832 1120l416 -416l-832 -832h-416v416zM1515 1024q0 -53 -37 -90l-166 -166l-416 416l166 165q36 38 90 38 q53 0 91 -38l235 -234q37 -39 37 -91z"/></svg> 编辑</a>
    <a class="btn b-danger dis" style="left:434px;width:62px"><svg class="fa" width="9.43" height="12" viewBox="0 -1536 1408 1792" style="fill:#fff;"><path transform="scale(1,-1)" d="M512 160v704q0 14 -9 23t-23 9h-64q-14 0 -23 -9t-9 -23v-704q0 -14 9 -23t23 -9h64q14 0 23 9t9 23zM768 160v704q0 14 -9 23t-23 9h-64q-14 0 -23 -9t-9 -23v-704q0 -14 9 -23t23 -9h64q14 0 23 9t9 23zM1024 160v704q0 14 -9 23t-23 9h-64q-14 0 -23 -9t-9 -23v-704 q0 -14 9 -23t23 -9h64q14 0 23 9t9 23zM480 1152h448l-48 117q-7 9 -17 11h-317q-10 -2 -17 -11zM1408 1120v-64q0 -14 -9 -23t-23 -9h-96v-948q0 -83 -47 -143.5t-113 -60.5h-832q-66 0 -113 58.5t-47 141.5v952h-96q-14 0 -23 9t-9 23v64q0 14 9 23t23 9h309l70 167 q15 37 54 63t79 26h320q40 0 79 -26t54 -63l70 -167h309q14 0 23 -9t9 -23z"/></svg> 删除</a>
    <a class="btn b-danger" style="left:500px;width:65px"><svg class="fa" width="11.14" height="12" viewBox="0 -1536 1664 1792" style="fill:#fff;"><path transform="scale(1,-1)" d="M1280 64q0 26 -19 45t-45 19t-45 -19t-19 -45t19 -45t45 -19t45 19t19 45zM1536 64q0 26 -19 45t-45 19t-45 -19t-19 -45t19 -45t45 -19t45 19t19 45zM1664 288v-320q0 -40 -28 -68t-68 -28h-1472q-40 0 -68 28t-28 68v320q0 40 28 68t68 28h427q21 -56 70.5 -92 t110.5 -36h256q61 0 110.5 36t70.5 92h427q40 0 68 -28t28 -68zM1339 936q-17 -40 -59 -40h-256v-448q0 -26 -19 -45t-45 -19h-256q-26 0 -45 19t-19 45v448h-256q-42 0 -59 40q-17 39 14 69l448 448q18 19 45 19t45 -19l448 -448q31 -30 14 -69z"/></svg> 导入</a>
    <a class="btn b-gray" style="left:568px;width:64px"><svg class="fa" width="10.29" height="12" viewBox="0 -1536 1536 1792" style="fill:#fff;"><path transform="scale(1,-1)" d="M1024 640q0 106 -75 181t-181 75t-181 -75t-75 -181t75 -181t181 -75t181 75t75 181zM1536 749v-222q0 -12 -8 -23t-20 -13l-185 -28q-19 -54 -39 -91q35 -50 107 -138q10 -12 10 -25t-9 -23q-27 -37 -99 -108t-94 -71q-12 0 -26 9l-138 108q-44 -23 -91 -38 q-16 -136 -29 -186q-7 -28 -36 -28h-222q-14 0 -24.5 8.5t-11.5 21.5l-28 184q-49 16 -90 37l-141 -107q-10 -9 -25 -9q-14 0 -25 11q-126 114 -165 168q-7 10 -7 23q0 12 8 23q15 21 51 66.5t54 70.5q-27 50 -41 99l-183 27q-13 2 -21 12.5t-8 23.5v222q0 12 8 23t19 13 l186 28q14 46 39 92q-40 57 -107 138q-10 12 -10 24q0 10 9 23q26 36 98.5 107.5t94.5 71.5q13 0 26 -10l138 -107q44 23 91 38q16 136 29 186q7 28 36 28h222q14 0 24.5 -8.5t11.5 -21.5l28 -184q49 -16 90 -37l142 107q9 9 24 9q13 0 25 -10q129 -119 165 -170q7 -8 7 -22 q0 -12 -8 -23q-15 -21 -51 -66.5t-54 -70.5q26 -50 41 -98l183 -28q13 -2 21 -12.5t8 -23.5z"/></svg> 更多</a>
    <div class="sinput"><span>搜索</span></div>
    <div class="bgroup">
      <a class="gb" style="left:0;width:38.3px;border-radius:3px 0 0 3px"><svg width="12" height="12" viewBox="0 0 12 12" style="position:absolute;left:13px;top:6.3px"><path fill="#333" d="M0 0h12v12H0zM1 2.2v8.8h10V2.2zM2 3.6h1.4v1.2H2zM4.4 3.6H10v1.2H4.4zM2 6h1.4v1.2H2zM4.4 6H10v1.2H4.4zM2 8.4h1.4v1.2H2zM4.4 8.4H10v1.2H4.4z" fill-rule="evenodd"/></svg></a>
      <a class="gb" style="left:37.3px;width:49.7px;border-radius:0"><svg width="12" height="11" viewBox="0 0 12 11" style="position:absolute;left:11.5px;top:7.5px"><g fill="#333"><rect x="0.10" y="0.20" width="2.4" height="2.9"/><rect x="3.20" y="0.20" width="2.4" height="2.9"/><rect x="6.30" y="0.20" width="2.4" height="2.9"/><rect x="9.40" y="0.20" width="2.4" height="2.9"/><rect x="0.10" y="4.05" width="2.4" height="2.9"/><rect x="3.20" y="4.05" width="2.4" height="2.9"/><rect x="6.30" y="4.05" width="2.4" height="2.9"/><rect x="9.40" y="4.05" width="2.4" height="2.9"/><rect x="0.10" y="7.90" width="2.4" height="2.9"/><rect x="3.20" y="7.90" width="2.4" height="2.9"/><rect x="6.30" y="7.90" width="2.4" height="2.9"/><rect x="9.40" y="7.90" width="2.4" height="2.9"/></g></svg><i class="caret" style="left:27.5px"></i></a>
      <a class="gb" style="left:86px;width:48.7px;border-radius:0 3px 3px 0"><svg width="12" height="13" viewBox="0 0 12 13" style="position:absolute;left:12px;top:5.75px"><g fill="#333"><rect x="0" y="9.8" width="12" height="3"/><path d="M4.6 0.6H11V7L8.9 4.9 5.6 8.2 3.4 6 6.7 2.7z"/></g></svg><i class="caret" style="left:26.5px"></i></a>
    </div>
    <a class="gb sb" style="left:1852.3px;width:37.5px;top:146px"><svg width="12.2" height="12.2" viewBox="0 0 13 13" style="position:absolute;left:11.6px;top:6.6px"><circle cx="5.2" cy="5.2" r="4" fill="none" stroke="#333" stroke-width="1.9"/><path d="M8 8L12 12" stroke="#333" stroke-width="2.2" stroke-linecap="round"/></svg></a>
  </div>
  <div class="twrap"><div class="tscroll"><table class="grid"><colgroup><col style="width:70px"><col style="width:56px"><col style="width:82px"><col style="width:97px"><col style="width:90px"><col style="width:97px"><col style="width:47px"><col style="width:69px"><col style="width:70px"><col style="width:163px"><col style="width:78px"><col style="width:138px"><col style="width:114px"><col style="width:115px"><col style="width:138px"><col style="width:43px"><col style="width:43px"><col style="width:170px"></colgroup><thead><tr><th class="first"><div class="thi">类型</div></th><th><div class="thi">组别ID</div></th><th><div class="thi">上级管理员</div></th><th><div class="thi">用户名</div></th><th><div class="thi">昵称</div></th><th><div class="thi">手机号</div></th><th><div class="thi">头像</div></th><th><div class="thi">开启提现</div></th><th><div class="thi">余额</div></th><th><div class="thi">活动获取(奖励+返还余额)</div></th><th><div class="thi">合计</div></th><th><div class="thi">登录时间</div></th><th><div class="thi">登录IP</div></th><th><div class="thi">加入IP</div></th><th><div class="thi">加入时间</div></th><th><div class="thi">状态</div></th><th><div class="thi">组名</div></th><th><div class="thi">操作</div></th></tr></thead><tbody><tr><td class="">普通会员</td><td>1</td><td>啊眯</td><td>a123456</td><td>海外源码</td><td>13344445555</td><td></td><td class="tg"><svg class="fa" width="27.43" height="24" viewBox="0 -1536 2048 1792" style="fill:#18bc9c;"><path transform="scale(1,-1)" d="M0 640q0 130 51 248.5t136.5 204t204 136.5t248.5 51h768q130 0 248.5 -51t204 -136.5t136.5 -204t51 -248.5t-51 -248.5t-136.5 -204t-204 -136.5t-248.5 -51h-768q-130 0 -248.5 51t-204 136.5t-136.5 204t-51 248.5zM1408 128q104 0 198.5 40.5t163.5 109.5 t109.5 163.5t40.5 198.5t-40.5 198.5t-109.5 163.5t-163.5 109.5t-198.5 40.5t-198.5 -40.5t-163.5 -109.5t-109.5 -163.5t-40.5 -198.5t40.5 -198.5t109.5 -163.5t163.5 -109.5t198.5 -40.5z"/></svg></td><td>49112.00</td><td>66976.80</td><td>116088.80</td><td>2023-03-06 16:47:35</td><td>178.173.225.132</td><td>178.173.225.132</td><td>2023-03-06 16:47:35</td><td class="g">正常</td><td>-</td><td class="ops"><div class="opsw"><a class="bx b-info"><svg class="fa" width="10.29" height="12" viewBox="0 -1536 1536 1792" style="fill:#fff;"><path transform="scale(1,-1)" d="M1280 576v128q0 26 -19 45t-45 19h-320v320q0 26 -19 45t-45 19h-128q-26 0 -45 -19t-19 -45v-320h-320q-26 0 -45 -19t-19 -45v-128q0 -26 19 -45t45 -19h320v-320q0 -26 19 -45t45 -19h128q26 0 45 19t19 45v320h320q26 0 45 19t19 45zM1536 1120v-960 q0 -119 -84.5 -203.5t-203.5 -84.5h-960q-119 0 -203.5 84.5t-84.5 203.5v960q0 119 84.5 203.5t203.5 84.5h960q119 0 203.5 -84.5t84.5 -203.5z"/></svg></a><a class="bx b-info m3"><svg class="fa" width="10.29" height="12" viewBox="0 -1536 1536 1792" style="fill:#fff;"><path transform="scale(1,-1)" d="M1280 576v128q0 26 -19 45t-45 19h-896q-26 0 -45 -19t-19 -45v-128q0 -26 19 -45t45 -19h896q26 0 45 19t19 45zM1536 1120v-960q0 -119 -84.5 -203.5t-203.5 -84.5h-960q-119 0 -203.5 84.5t-84.5 203.5v960q0 119 84.5 203.5t203.5 84.5h960q119 0 203.5 -84.5 t84.5 -203.5z"/></svg></a><a class="bx b-info w24"><svg class="fa" width="12.00" height="12" viewBox="0 -1536 1792 1792" style="fill:#fff;"><path transform="scale(1,-1)" d="M1664 896q53 0 90.5 -37.5t37.5 -90.5t-37.5 -90.5t-90.5 -37.5v-384q0 -52 -38 -90t-90 -38q-417 347 -812 380q-58 -19 -91 -66t-31 -100.5t40 -92.5q-20 -33 -23 -65.5t6 -58t33.5 -55t48 -50t61.5 -50.5q-29 -58 -111.5 -83t-168.5 -11.5t-132 55.5q-7 23 -29.5 87.5 t-32 94.5t-23 89t-15 101t3.5 98.5t22 110.5h-122q-66 0 -113 47t-47 113v192q0 66 47 113t113 47h480q435 0 896 384q52 0 90 -38t38 -90v-384zM1536 292v954q-394 -302 -768 -343v-270q377 -42 768 -341z"/></svg></a><a class="bx b-danger"><svg class="fa" width="10.29" height="12" viewBox="0 -1536 1536 1792" style="fill:#fff;"><path transform="scale(1,-1)" d="M1097 457l-146 -146q-10 -10 -23 -10t-23 10l-137 137l-137 -137q-10 -10 -23 -10t-23 10l-146 146q-10 10 -10 23t10 23l137 137l-137 137q-10 10 -10 23t10 23l146 146q10 10 23 10t23 -10l137 -137l137 137q10 10 23 10t23 -10l146 -146q10 -10 10 -23t-10 -23 l-137 -137l137 -137q10 -10 10 -23t-10 -23zM1312 640q0 148 -73 273t-198 198t-273 73t-273 -73t-198 -198t-73 -273t73 -273t198 -198t273 -73t273 73t198 198t73 273zM1536 640q0 -209 -103 -385.5t-279.5 -279.5t-385.5 -103t-385.5 103t-279.5 279.5t-103 385.5 t103 385.5t279.5 279.5t385.5 103t385.5 -103t279.5 -279.5t103 -385.5z"/></svg></a><a class="bx b-success"><svg class="fa" width="10.29" height="12" viewBox="0 -1536 1536 1792" style="fill:#fff;"><path transform="scale(1,-1)" d="M363 0l91 91l-235 235l-91 -91v-107h128v-128h107zM886 928q0 22 -22 22q-10 0 -17 -7l-542 -542q-7 -7 -7 -17q0 -22 22 -22q10 0 17 7l542 542q7 7 7 17zM832 1120l416 -416l-832 -832h-416v416zM1515 1024q0 -53 -37 -90l-166 -166l-416 416l166 165q36 38 90 38 q53 0 91 -38l235 -234q37 -39 37 -91z"/></svg></a><a class="bx b-danger w21"><svg class="fa" width="9.43" height="12" viewBox="0 -1536 1408 1792" style="fill:#fff;"><path transform="scale(1,-1)" d="M512 160v704q0 14 -9 23t-23 9h-64q-14 0 -23 -9t-9 -23v-704q0 -14 9 -23t23 -9h64q14 0 23 9t9 23zM768 160v704q0 14 -9 23t-23 9h-64q-14 0 -23 -9t-9 -23v-704q0 -14 9 -23t23 -9h64q14 0 23 9t9 23zM1024 160v704q0 14 -9 23t-23 9h-64q-14 0 -23 -9t-9 -23v-704 q0 -14 9 -23t23 -9h64q14 0 23 9t9 23zM480 1152h448l-48 117q-7 9 -17 11h-317q-10 -2 -17 -11zM1408 1120v-64q0 -14 -9 -23t-23 -9h-96v-948q0 -83 -47 -143.5t-113 -60.5h-832q-66 0 -113 58.5t-47 141.5v952h-96q-14 0 -23 9t-9 23v64q0 14 9 23t23 9h309l70 167 q15 37 54 63t79 26h320q40 0 79 -26t54 -63l70 -167h309q14 0 23 -9t9 -23z"/></svg></a></div></td></tr><tr><td class="">普通会员</td><td>1</td><td>苏宁</td><td>13800138000</td><td>啊啊啊啊</td><td>13800138000</td><td></td><td class="tg"><svg class="fa" width="27.43" height="24" viewBox="0 -1536 2048 1792" style="fill:#18bc9c;"><path transform="scale(1,-1)" d="M0 640q0 130 51 248.5t136.5 204t204 136.5t248.5 51h768q130 0 248.5 -51t204 -136.5t136.5 -204t51 -248.5t-51 -248.5t-136.5 -204t-204 -136.5t-248.5 -51h-768q-130 0 -248.5 51t-204 136.5t-136.5 204t-51 248.5zM1408 128q104 0 198.5 40.5t163.5 109.5 t109.5 163.5t40.5 198.5t-40.5 198.5t-109.5 163.5t-163.5 109.5t-198.5 40.5t-198.5 -40.5t-163.5 -109.5t-109.5 -163.5t-40.5 -198.5t40.5 -198.5t109.5 -163.5t163.5 -109.5t198.5 -40.5z"/></svg></td><td>0.00</td><td>0.00</td><td>0.00</td><td>2023-02-16 00:09:12</td><td>18.162.45.90</td><td>18.162.45.90</td><td>2023-02-16 00:09:12</td><td class="g">正常</td><td>-</td><td class="ops"><div class="opsw"><a class="bx b-info"><svg class="fa" width="10.29" height="12" viewBox="0 -1536 1536 1792" style="fill:#fff;"><path transform="scale(1,-1)" d="M1280 576v128q0 26 -19 45t-45 19h-320v320q0 26 -19 45t-45 19h-128q-26 0 -45 -19t-19 -45v-320h-320q-26 0 -45 -19t-19 -45v-128q0 -26 19 -45t45 -19h320v-320q0 -26 19 -45t45 -19h128q26 0 45 19t19 45v320h320q26 0 45 19t19 45zM1536 1120v-960 q0 -119 -84.5 -203.5t-203.5 -84.5h-960q-119 0 -203.5 84.5t-84.5 203.5v960q0 119 84.5 203.5t203.5 84.5h960q119 0 203.5 -84.5t84.5 -203.5z"/></svg></a><a class="bx b-info m3"><svg class="fa" width="10.29" height="12" viewBox="0 -1536 1536 1792" style="fill:#fff;"><path transform="scale(1,-1)" d="M1280 576v128q0 26 -19 45t-45 19h-896q-26 0 -45 -19t-19 -45v-128q0 -26 19 -45t45 -19h896q26 0 45 19t19 45zM1536 1120v-960q0 -119 -84.5 -203.5t-203.5 -84.5h-960q-119 0 -203.5 84.5t-84.5 203.5v960q0 119 84.5 203.5t203.5 84.5h960q119 0 203.5 -84.5 t84.5 -203.5z"/></svg></a><a class="bx b-info w24"><svg class="fa" width="12.00" height="12" viewBox="0 -1536 1792 1792" style="fill:#fff;"><path transform="scale(1,-1)" d="M1664 896q53 0 90.5 -37.5t37.5 -90.5t-37.5 -90.5t-90.5 -37.5v-384q0 -52 -38 -90t-90 -38q-417 347 -812 380q-58 -19 -91 -66t-31 -100.5t40 -92.5q-20 -33 -23 -65.5t6 -58t33.5 -55t48 -50t61.5 -50.5q-29 -58 -111.5 -83t-168.5 -11.5t-132 55.5q-7 23 -29.5 87.5 t-32 94.5t-23 89t-15 101t3.5 98.5t22 110.5h-122q-66 0 -113 47t-47 113v192q0 66 47 113t113 47h480q435 0 896 384q52 0 90 -38t38 -90v-384zM1536 292v954q-394 -302 -768 -343v-270q377 -42 768 -341z"/></svg></a><a class="bx b-danger"><svg class="fa" width="10.29" height="12" viewBox="0 -1536 1536 1792" style="fill:#fff;"><path transform="scale(1,-1)" d="M1097 457l-146 -146q-10 -10 -23 -10t-23 10l-137 137l-137 -137q-10 -10 -23 -10t-23 10l-146 146q-10 10 -10 23t10 23l137 137l-137 137q-10 10 -10 23t10 23l146 146q10 10 23 10t23 -10l137 -137l137 137q10 10 23 10t23 -10l146 -146q10 -10 10 -23t-10 -23 l-137 -137l137 -137q10 -10 10 -23t-10 -23zM1312 640q0 148 -73 273t-198 198t-273 73t-273 -73t-198 -198t-73 -273t73 -273t198 -198t273 -73t273 73t198 198t73 273zM1536 640q0 -209 -103 -385.5t-279.5 -279.5t-385.5 -103t-385.5 103t-279.5 279.5t-103 385.5 t103 385.5t279.5 279.5t385.5 103t385.5 -103t279.5 -279.5t103 -385.5z"/></svg></a><a class="bx b-success"><svg class="fa" width="10.29" height="12" viewBox="0 -1536 1536 1792" style="fill:#fff;"><path transform="scale(1,-1)" d="M363 0l91 91l-235 235l-91 -91v-107h128v-128h107zM886 928q0 22 -22 22q-10 0 -17 -7l-542 -542q-7 -7 -7 -17q0 -22 22 -22q10 0 17 7l542 542q7 7 7 17zM832 1120l416 -416l-832 -832h-416v416zM1515 1024q0 -53 -37 -90l-166 -166l-416 416l166 165q36 38 90 38 q53 0 91 -38l235 -234q37 -39 37 -91z"/></svg></a><a class="bx b-danger w21"><svg class="fa" width="9.43" height="12" viewBox="0 -1536 1408 1792" style="fill:#fff;"><path transform="scale(1,-1)" d="M512 160v704q0 14 -9 23t-23 9h-64q-14 0 -23 -9t-9 -23v-704q0 -14 9 -23t23 -9h64q14 0 23 9t9 23zM768 160v704q0 14 -9 23t-23 9h-64q-14 0 -23 -9t-9 -23v-704q0 -14 9 -23t23 -9h64q14 0 23 9t9 23zM1024 160v704q0 14 -9 23t-23 9h-64q-14 0 -23 -9t-9 -23v-704 q0 -14 9 -23t23 -9h64q14 0 23 9t9 23zM480 1152h448l-48 117q-7 9 -17 11h-317q-10 -2 -17 -11zM1408 1120v-64q0 -14 -9 -23t-23 -9h-96v-948q0 -83 -47 -143.5t-113 -60.5h-832q-66 0 -113 58.5t-47 141.5v952h-96q-14 0 -23 9t-9 23v64q0 14 9 23t23 9h309l70 167 q15 37 54 63t79 26h320q40 0 79 -26t54 -63l70 -167h309q14 0 23 -9t9 -23z"/></svg></a></div></td></tr><tr><td class="">普通会员</td><td>1</td><td>啊眯</td><td>快乐天使520</td><td>快乐天使520</td><td>13655809632</td><td></td><td class="tg"><svg class="fa" width="27.43" height="24" viewBox="0 -1536 2048 1792" style="fill:#18bc9c;"><path transform="scale(1,-1)" d="M0 640q0 130 51 248.5t136.5 204t204 136.5t248.5 51h768q130 0 248.5 -51t204 -136.5t136.5 -204t51 -248.5t-51 -248.5t-136.5 -204t-204 -136.5t-248.5 -51h-768q-130 0 -248.5 51t-204 136.5t-136.5 204t-51 248.5zM1408 128q104 0 198.5 40.5t163.5 109.5 t109.5 163.5t40.5 198.5t-40.5 198.5t-109.5 163.5t-163.5 109.5t-198.5 40.5t-198.5 -40.5t-163.5 -109.5t-109.5 -163.5t-40.5 -198.5t40.5 -198.5t109.5 -163.5t163.5 -109.5t198.5 -40.5z"/></svg></td><td>0.00</td><td>0.00</td><td>0.00</td><td>2023-01-18 01:17:51</td><td>168.235.203.243</td><td>168.235.203.243</td><td>2023-01-18 01:17:51</td><td class="g">正常</td><td>-</td><td class="ops"><div class="opsw"><a class="bx b-info"><svg class="fa" width="10.29" height="12" viewBox="0 -1536 1536 1792" style="fill:#fff;"><path transform="scale(1,-1)" d="M1280 576v128q0 26 -19 45t-45 19h-320v320q0 26 -19 45t-45 19h-128q-26 0 -45 -19t-19 -45v-320h-320q-26 0 -45 -19t-19 -45v-128q0 -26 19 -45t45 -19h320v-320q0 -26 19 -45t45 -19h128q26 0 45 19t19 45v320h320q26 0 45 19t19 45zM1536 1120v-960 q0 -119 -84.5 -203.5t-203.5 -84.5h-960q-119 0 -203.5 84.5t-84.5 203.5v960q0 119 84.5 203.5t203.5 84.5h960q119 0 203.5 -84.5t84.5 -203.5z"/></svg></a><a class="bx b-info m3"><svg class="fa" width="10.29" height="12" viewBox="0 -1536 1536 1792" style="fill:#fff;"><path transform="scale(1,-1)" d="M1280 576v128q0 26 -19 45t-45 19h-896q-26 0 -45 -19t-19 -45v-128q0 -26 19 -45t45 -19h896q26 0 45 19t19 45zM1536 1120v-960q0 -119 -84.5 -203.5t-203.5 -84.5h-960q-119 0 -203.5 84.5t-84.5 203.5v960q0 119 84.5 203.5t203.5 84.5h960q119 0 203.5 -84.5 t84.5 -203.5z"/></svg></a><a class="bx b-info w24"><svg class="fa" width="12.00" height="12" viewBox="0 -1536 1792 1792" style="fill:#fff;"><path transform="scale(1,-1)" d="M1664 896q53 0 90.5 -37.5t37.5 -90.5t-37.5 -90.5t-90.5 -37.5v-384q0 -52 -38 -90t-90 -38q-417 347 -812 380q-58 -19 -91 -66t-31 -100.5t40 -92.5q-20 -33 -23 -65.5t6 -58t33.5 -55t48 -50t61.5 -50.5q-29 -58 -111.5 -83t-168.5 -11.5t-132 55.5q-7 23 -29.5 87.5 t-32 94.5t-23 89t-15 101t3.5 98.5t22 110.5h-122q-66 0 -113 47t-47 113v192q0 66 47 113t113 47h480q435 0 896 384q52 0 90 -38t38 -90v-384zM1536 292v954q-394 -302 -768 -343v-270q377 -42 768 -341z"/></svg></a><a class="bx b-danger"><svg class="fa" width="10.29" height="12" viewBox="0 -1536 1536 1792" style="fill:#fff;"><path transform="scale(1,-1)" d="M1097 457l-146 -146q-10 -10 -23 -10t-23 10l-137 137l-137 -137q-10 -10 -23 -10t-23 10l-146 146q-10 10 -10 23t10 23l137 137l-137 137q-10 10 -10 23t10 23l146 146q10 10 23 10t23 -10l137 -137l137 137q10 10 23 10t23 -10l146 -146q10 -10 10 -23t-10 -23 l-137 -137l137 -137q10 -10 10 -23t-10 -23zM1312 640q0 148 -73 273t-198 198t-273 73t-273 -73t-198 -198t-73 -273t73 -273t198 -198t273 -73t273 73t198 198t73 273zM1536 640q0 -209 -103 -385.5t-279.5 -279.5t-385.5 -103t-385.5 103t-279.5 279.5t-103 385.5 t103 385.5t279.5 279.5t385.5 103t385.5 -103t279.5 -279.5t103 -385.5z"/></svg></a><a class="bx b-success"><svg class="fa" width="10.29" height="12" viewBox="0 -1536 1536 1792" style="fill:#fff;"><path transform="scale(1,-1)" d="M363 0l91 91l-235 235l-91 -91v-107h128v-128h107zM886 928q0 22 -22 22q-10 0 -17 -7l-542 -542q-7 -7 -7 -17q0 -22 22 -22q10 0 17 7l542 542q7 7 7 17zM832 1120l416 -416l-832 -832h-416v416zM1515 1024q0 -53 -37 -90l-166 -166l-416 416l166 165q36 38 90 38 q53 0 91 -38l235 -234q37 -39 37 -91z"/></svg></a><a class="bx b-danger w21"><svg class="fa" width="9.43" height="12" viewBox="0 -1536 1408 1792" style="fill:#fff;"><path transform="scale(1,-1)" d="M512 160v704q0 14 -9 23t-23 9h-64q-14 0 -23 -9t-9 -23v-704q0 -14 9 -23t23 -9h64q14 0 23 9t9 23zM768 160v704q0 14 -9 23t-23 9h-64q-14 0 -23 -9t-9 -23v-704q0 -14 9 -23t23 -9h64q14 0 23 9t9 23zM1024 160v704q0 14 -9 23t-23 9h-64q-14 0 -23 -9t-9 -23v-704 q0 -14 9 -23t23 -9h64q14 0 23 9t9 23zM480 1152h448l-48 117q-7 9 -17 11h-317q-10 -2 -17 -11zM1408 1120v-64q0 -14 -9 -23t-23 -9h-96v-948q0 -83 -47 -143.5t-113 -60.5h-832q-66 0 -113 58.5t-47 141.5v952h-96q-14 0 -23 9t-9 23v64q0 14 9 23t23 9h309l70 167 q15 37 54 63t79 26h320q40 0 79 -26t54 -63l70 -167h309q14 0 23 -9t9 -23z"/></svg></a></div></td></tr><tr><td class="">普通会员</td><td>1</td><td>啊眯</td><td>苏宁易购</td><td>苏宁易购</td><td>15845358525</td><td></td><td class="tg"><svg class="fa" width="27.43" height="24" viewBox="0 -1536 2048 1792" style="fill:#18bc9c;"><path transform="scale(1,-1)" d="M0 640q0 130 51 248.5t136.5 204t204 136.5t248.5 51h768q130 0 248.5 -51t204 -136.5t136.5 -204t51 -248.5t-51 -248.5t-136.5 -204t-204 -136.5t-248.5 -51h-768q-130 0 -248.5 51t-204 136.5t-136.5 204t-51 248.5zM1408 128q104 0 198.5 40.5t163.5 109.5 t109.5 163.5t40.5 198.5t-40.5 198.5t-109.5 163.5t-163.5 109.5t-198.5 40.5t-198.5 -40.5t-163.5 -109.5t-109.5 -163.5t-40.5 -198.5t40.5 -198.5t109.5 -163.5t163.5 -109.5t198.5 -40.5z"/></svg></td><td>0.00</td><td>0.00</td><td>0.00</td><td>2023-01-18 01:04:23</td><td>117.20.116.168</td><td>117.20.116.168</td><td>2023-01-18 01:04:23</td><td class="g">正常</td><td>-</td><td class="ops"><div class="opsw"><a class="bx b-info"><svg class="fa" width="10.29" height="12" viewBox="0 -1536 1536 1792" style="fill:#fff;"><path transform="scale(1,-1)" d="M1280 576v128q0 26 -19 45t-45 19h-320v320q0 26 -19 45t-45 19h-128q-26 0 -45 -19t-19 -45v-320h-320q-26 0 -45 -19t-19 -45v-128q0 -26 19 -45t45 -19h320v-320q0 -26 19 -45t45 -19h128q26 0 45 19t19 45v320h320q26 0 45 19t19 45zM1536 1120v-960 q0 -119 -84.5 -203.5t-203.5 -84.5h-960q-119 0 -203.5 84.5t-84.5 203.5v960q0 119 84.5 203.5t203.5 84.5h960q119 0 203.5 -84.5t84.5 -203.5z"/></svg></a><a class="bx b-info m3"><svg class="fa" width="10.29" height="12" viewBox="0 -1536 1536 1792" style="fill:#fff;"><path transform="scale(1,-1)" d="M1280 576v128q0 26 -19 45t-45 19h-896q-26 0 -45 -19t-19 -45v-128q0 -26 19 -45t45 -19h896q26 0 45 19t19 45zM1536 1120v-960q0 -119 -84.5 -203.5t-203.5 -84.5h-960q-119 0 -203.5 84.5t-84.5 203.5v960q0 119 84.5 203.5t203.5 84.5h960q119 0 203.5 -84.5 t84.5 -203.5z"/></svg></a><a class="bx b-info w24"><svg class="fa" width="12.00" height="12" viewBox="0 -1536 1792 1792" style="fill:#fff;"><path transform="scale(1,-1)" d="M1664 896q53 0 90.5 -37.5t37.5 -90.5t-37.5 -90.5t-90.5 -37.5v-384q0 -52 -38 -90t-90 -38q-417 347 -812 380q-58 -19 -91 -66t-31 -100.5t40 -92.5q-20 -33 -23 -65.5t6 -58t33.5 -55t48 -50t61.5 -50.5q-29 -58 -111.5 -83t-168.5 -11.5t-132 55.5q-7 23 -29.5 87.5 t-32 94.5t-23 89t-15 101t3.5 98.5t22 110.5h-122q-66 0 -113 47t-47 113v192q0 66 47 113t113 47h480q435 0 896 384q52 0 90 -38t38 -90v-384zM1536 292v954q-394 -302 -768 -343v-270q377 -42 768 -341z"/></svg></a><a class="bx b-danger"><svg class="fa" width="10.29" height="12" viewBox="0 -1536 1536 1792" style="fill:#fff;"><path transform="scale(1,-1)" d="M1097 457l-146 -146q-10 -10 -23 -10t-23 10l-137 137l-137 -137q-10 -10 -23 -10t-23 10l-146 146q-10 10 -10 23t10 23l137 137l-137 137q-10 10 -10 23t10 23l146 146q10 10 23 10t23 -10l137 -137l137 137q10 10 23 10t23 -10l146 -146q10 -10 10 -23t-10 -23 l-137 -137l137 -137q10 -10 10 -23t-10 -23zM1312 640q0 148 -73 273t-198 198t-273 73t-273 -73t-198 -198t-73 -273t73 -273t198 -198t273 -73t273 73t198 198t73 273zM1536 640q0 -209 -103 -385.5t-279.5 -279.5t-385.5 -103t-385.5 103t-279.5 279.5t-103 385.5 t103 385.5t279.5 279.5t385.5 103t385.5 -103t279.5 -279.5t103 -385.5z"/></svg></a><a class="bx b-success"><svg class="fa" width="10.29" height="12" viewBox="0 -1536 1536 1792" style="fill:#fff;"><path transform="scale(1,-1)" d="M363 0l91 91l-235 235l-91 -91v-107h128v-128h107zM886 928q0 22 -22 22q-10 0 -17 -7l-542 -542q-7 -7 -7 -17q0 -22 22 -22q10 0 17 7l542 542q7 7 7 17zM832 1120l416 -416l-832 -832h-416v416zM1515 1024q0 -53 -37 -90l-166 -166l-416 416l166 165q36 38 90 38 q53 0 91 -38l235 -234q37 -39 37 -91z"/></svg></a><a class="bx b-danger w21"><svg class="fa" width="9.43" height="12" viewBox="0 -1536 1408 1792" style="fill:#fff;"><path transform="scale(1,-1)" d="M512 160v704q0 14 -9 23t-23 9h-64q-14 0 -23 -9t-9 -23v-704q0 -14 9 -23t23 -9h64q14 0 23 9t9 23zM768 160v704q0 14 -9 23t-23 9h-64q-14 0 -23 -9t-9 -23v-704q0 -14 9 -23t23 -9h64q14 0 23 9t9 23zM1024 160v704q0 14 -9 23t-23 9h-64q-14 0 -23 -9t-9 -23v-704 q0 -14 9 -23t23 -9h64q14 0 23 9t9 23zM480 1152h448l-48 117q-7 9 -17 11h-317q-10 -2 -17 -11zM1408 1120v-64q0 -14 -9 -23t-23 -9h-96v-948q0 -83 -47 -143.5t-113 -60.5h-832q-66 0 -113 58.5t-47 141.5v952h-96q-14 0 -23 9t-9 23v64q0 14 9 23t23 9h309l70 167 q15 37 54 63t79 26h320q40 0 79 -26t54 -63l70 -167h309q14 0 23 -9t9 -23z"/></svg></a></div></td></tr><tr><td class="">普通会员</td><td>1</td><td>啊眯</td><td>张滟潭州教育</td><td>张洢</td><td>18021685868</td><td></td><td class="tg"><svg class="fa" width="27.43" height="24" viewBox="0 -1536 2048 1792" style="fill:#18bc9c;"><path transform="scale(1,-1)" d="M0 640q0 130 51 248.5t136.5 204t204 136.5t248.5 51h768q130 0 248.5 -51t204 -136.5t136.5 -204t51 -248.5t-51 -248.5t-136.5 -204t-204 -136.5t-248.5 -51h-768q-130 0 -248.5 51t-204 136.5t-136.5 204t-51 248.5zM1408 128q104 0 198.5 40.5t163.5 109.5 t109.5 163.5t40.5 198.5t-40.5 198.5t-109.5 163.5t-163.5 109.5t-198.5 40.5t-198.5 -40.5t-163.5 -109.5t-109.5 -163.5t-40.5 -198.5t40.5 -198.5t109.5 -163.5t163.5 -109.5t198.5 -40.5z"/></svg></td><td>0.00</td><td>0.00</td><td>0.00</td><td>2023-01-17 14:26:09</td><td>49.94.112.108</td><td>49.94.112.108</td><td>2023-01-17 14:10:30</td><td class="g">正常</td><td>-</td><td class="ops"><div class="opsw"><a class="bx b-info"><svg class="fa" width="10.29" height="12" viewBox="0 -1536 1536 1792" style="fill:#fff;"><path transform="scale(1,-1)" d="M1280 576v128q0 26 -19 45t-45 19h-320v320q0 26 -19 45t-45 19h-128q-26 0 -45 -19t-19 -45v-320h-320q-26 0 -45 -19t-19 -45v-128q0 -26 19 -45t45 -19h320v-320q0 -26 19 -45t45 -19h128q26 0 45 19t19 45v320h320q26 0 45 19t19 45zM1536 1120v-960 q0 -119 -84.5 -203.5t-203.5 -84.5h-960q-119 0 -203.5 84.5t-84.5 203.5v960q0 119 84.5 203.5t203.5 84.5h960q119 0 203.5 -84.5t84.5 -203.5z"/></svg></a><a class="bx b-info m3"><svg class="fa" width="10.29" height="12" viewBox="0 -1536 1536 1792" style="fill:#fff;"><path transform="scale(1,-1)" d="M1280 576v128q0 26 -19 45t-45 19h-896q-26 0 -45 -19t-19 -45v-128q0 -26 19 -45t45 -19h896q26 0 45 19t19 45zM1536 1120v-960q0 -119 -84.5 -203.5t-203.5 -84.5h-960q-119 0 -203.5 84.5t-84.5 203.5v960q0 119 84.5 203.5t203.5 84.5h960q119 0 203.5 -84.5 t84.5 -203.5z"/></svg></a><a class="bx b-info w24"><svg class="fa" width="12.00" height="12" viewBox="0 -1536 1792 1792" style="fill:#fff;"><path transform="scale(1,-1)" d="M1664 896q53 0 90.5 -37.5t37.5 -90.5t-37.5 -90.5t-90.5 -37.5v-384q0 -52 -38 -90t-90 -38q-417 347 -812 380q-58 -19 -91 -66t-31 -100.5t40 -92.5q-20 -33 -23 -65.5t6 -58t33.5 -55t48 -50t61.5 -50.5q-29 -58 -111.5 -83t-168.5 -11.5t-132 55.5q-7 23 -29.5 87.5 t-32 94.5t-23 89t-15 101t3.5 98.5t22 110.5h-122q-66 0 -113 47t-47 113v192q0 66 47 113t113 47h480q435 0 896 384q52 0 90 -38t38 -90v-384zM1536 292v954q-394 -302 -768 -343v-270q377 -42 768 -341z"/></svg></a><a class="bx b-danger"><svg class="fa" width="10.29" height="12" viewBox="0 -1536 1536 1792" style="fill:#fff;"><path transform="scale(1,-1)" d="M1097 457l-146 -146q-10 -10 -23 -10t-23 10l-137 137l-137 -137q-10 -10 -23 -10t-23 10l-146 146q-10 10 -10 23t10 23l137 137l-137 137q-10 10 -10 23t10 23l146 146q10 10 23 10t23 -10l137 -137l137 137q10 10 23 10t23 -10l146 -146q10 -10 10 -23t-10 -23 l-137 -137l137 -137q10 -10 10 -23t-10 -23zM1312 640q0 148 -73 273t-198 198t-273 73t-273 -73t-198 -198t-73 -273t73 -273t198 -198t273 -73t273 73t198 198t73 273zM1536 640q0 -209 -103 -385.5t-279.5 -279.5t-385.5 -103t-385.5 103t-279.5 279.5t-103 385.5 t103 385.5t279.5 279.5t385.5 103t385.5 -103t279.5 -279.5t103 -385.5z"/></svg></a><a class="bx b-success"><svg class="fa" width="10.29" height="12" viewBox="0 -1536 1536 1792" style="fill:#fff;"><path transform="scale(1,-1)" d="M363 0l91 91l-235 235l-91 -91v-107h128v-128h107zM886 928q0 22 -22 22q-10 0 -17 -7l-542 -542q-7 -7 -7 -17q0 -22 22 -22q10 0 17 7l542 542q7 7 7 17zM832 1120l416 -416l-832 -832h-416v416zM1515 1024q0 -53 -37 -90l-166 -166l-416 416l166 165q36 38 90 38 q53 0 91 -38l235 -234q37 -39 37 -91z"/></svg></a><a class="bx b-danger w21"><svg class="fa" width="9.43" height="12" viewBox="0 -1536 1408 1792" style="fill:#fff;"><path transform="scale(1,-1)" d="M512 160v704q0 14 -9 23t-23 9h-64q-14 0 -23 -9t-9 -23v-704q0 -14 9 -23t23 -9h64q14 0 23 9t9 23zM768 160v704q0 14 -9 23t-23 9h-64q-14 0 -23 -9t-9 -23v-704q0 -14 9 -23t23 -9h64q14 0 23 9t9 23zM1024 160v704q0 14 -9 23t-23 9h-64q-14 0 -23 -9t-9 -23v-704 q0 -14 9 -23t23 -9h64q14 0 23 9t9 23zM480 1152h448l-48 117q-7 9 -17 11h-317q-10 -2 -17 -11zM1408 1120v-64q0 -14 -9 -23t-23 -9h-96v-948q0 -83 -47 -143.5t-113 -60.5h-832q-66 0 -113 58.5t-47 141.5v952h-96q-14 0 -23 9t-9 23v64q0 14 9 23t23 9h309l70 167 q15 37 54 63t79 26h320q40 0 79 -26t54 -63l70 -167h309q14 0 23 -9t9 -23z"/></svg></a></div></td></tr><tr><td class="">普通会员</td><td>1</td><td>啊眯</td><td>方秋雨888</td><td>方秋雨888</td><td>17730121451</td><td></td><td class="tg"><svg class="fa" width="27.43" height="24" viewBox="0 -1536 2048 1792" style="fill:#18bc9c;"><path transform="scale(1,-1)" d="M0 640q0 130 51 248.5t136.5 204t204 136.5t248.5 51h768q130 0 248.5 -51t204 -136.5t136.5 -204t51 -248.5t-51 -248.5t-136.5 -204t-204 -136.5t-248.5 -51h-768q-130 0 -248.5 51t-204 136.5t-136.5 204t-51 248.5zM1408 128q104 0 198.5 40.5t163.5 109.5 t109.5 163.5t40.5 198.5t-40.5 198.5t-109.5 163.5t-163.5 109.5t-198.5 40.5t-198.5 -40.5t-163.5 -109.5t-109.5 -163.5t-40.5 -198.5t40.5 -198.5t109.5 -163.5t163.5 -109.5t198.5 -40.5z"/></svg></td><td>0.00</td><td>0.00</td><td>0.00</td><td>2023-01-17 13:12:59</td><td>49.71.178.79</td><td>49.71.178.79</td><td>2023-01-17 13:12:59</td><td class="g">正常</td><td>-</td><td class="ops"><div class="opsw"><a class="bx b-info"><svg class="fa" width="10.29" height="12" viewBox="0 -1536 1536 1792" style="fill:#fff;"><path transform="scale(1,-1)" d="M1280 576v128q0 26 -19 45t-45 19h-320v320q0 26 -19 45t-45 19h-128q-26 0 -45 -19t-19 -45v-320h-320q-26 0 -45 -19t-19 -45v-128q0 -26 19 -45t45 -19h320v-320q0 -26 19 -45t45 -19h128q26 0 45 19t19 45v320h320q26 0 45 19t19 45zM1536 1120v-960 q0 -119 -84.5 -203.5t-203.5 -84.5h-960q-119 0 -203.5 84.5t-84.5 203.5v960q0 119 84.5 203.5t203.5 84.5h960q119 0 203.5 -84.5t84.5 -203.5z"/></svg></a><a class="bx b-info m3"><svg class="fa" width="10.29" height="12" viewBox="0 -1536 1536 1792" style="fill:#fff;"><path transform="scale(1,-1)" d="M1280 576v128q0 26 -19 45t-45 19h-896q-26 0 -45 -19t-19 -45v-128q0 -26 19 -45t45 -19h896q26 0 45 19t19 45zM1536 1120v-960q0 -119 -84.5 -203.5t-203.5 -84.5h-960q-119 0 -203.5 84.5t-84.5 203.5v960q0 119 84.5 203.5t203.5 84.5h960q119 0 203.5 -84.5 t84.5 -203.5z"/></svg></a><a class="bx b-info w24"><svg class="fa" width="12.00" height="12" viewBox="0 -1536 1792 1792" style="fill:#fff;"><path transform="scale(1,-1)" d="M1664 896q53 0 90.5 -37.5t37.5 -90.5t-37.5 -90.5t-90.5 -37.5v-384q0 -52 -38 -90t-90 -38q-417 347 -812 380q-58 -19 -91 -66t-31 -100.5t40 -92.5q-20 -33 -23 -65.5t6 -58t33.5 -55t48 -50t61.5 -50.5q-29 -58 -111.5 -83t-168.5 -11.5t-132 55.5q-7 23 -29.5 87.5 t-32 94.5t-23 89t-15 101t3.5 98.5t22 110.5h-122q-66 0 -113 47t-47 113v192q0 66 47 113t113 47h480q435 0 896 384q52 0 90 -38t38 -90v-384zM1536 292v954q-394 -302 -768 -343v-270q377 -42 768 -341z"/></svg></a><a class="bx b-danger"><svg class="fa" width="10.29" height="12" viewBox="0 -1536 1536 1792" style="fill:#fff;"><path transform="scale(1,-1)" d="M1097 457l-146 -146q-10 -10 -23 -10t-23 10l-137 137l-137 -137q-10 -10 -23 -10t-23 10l-146 146q-10 10 -10 23t10 23l137 137l-137 137q-10 10 -10 23t10 23l146 146q10 10 23 10t23 -10l137 -137l137 137q10 10 23 10t23 -10l146 -146q10 -10 10 -23t-10 -23 l-137 -137l137 -137q10 -10 10 -23t-10 -23zM1312 640q0 148 -73 273t-198 198t-273 73t-273 -73t-198 -198t-73 -273t73 -273t198 -198t273 -73t273 73t198 198t73 273zM1536 640q0 -209 -103 -385.5t-279.5 -279.5t-385.5 -103t-385.5 103t-279.5 279.5t-103 385.5 t103 385.5t279.5 279.5t385.5 103t385.5 -103t279.5 -279.5t103 -385.5z"/></svg></a><a class="bx b-success"><svg class="fa" width="10.29" height="12" viewBox="0 -1536 1536 1792" style="fill:#fff;"><path transform="scale(1,-1)" d="M363 0l91 91l-235 235l-91 -91v-107h128v-128h107zM886 928q0 22 -22 22q-10 0 -17 -7l-542 -542q-7 -7 -7 -17q0 -22 22 -22q10 0 17 7l542 542q7 7 7 17zM832 1120l416 -416l-832 -832h-416v416zM1515 1024q0 -53 -37 -90l-166 -166l-416 416l166 165q36 38 90 38 q53 0 91 -38l235 -234q37 -39 37 -91z"/></svg></a><a class="bx b-danger w21"><svg class="fa" width="9.43" height="12" viewBox="0 -1536 1408 1792" style="fill:#fff;"><path transform="scale(1,-1)" d="M512 160v704q0 14 -9 23t-23 9h-64q-14 0 -23 -9t-9 -23v-704q0 -14 9 -23t23 -9h64q14 0 23 9t9 23zM768 160v704q0 14 -9 23t-23 9h-64q-14 0 -23 -9t-9 -23v-704q0 -14 9 -23t23 -9h64q14 0 23 9t9 23zM1024 160v704q0 14 -9 23t-23 9h-64q-14 0 -23 -9t-9 -23v-704 q0 -14 9 -23t23 -9h64q14 0 23 9t9 23zM480 1152h448l-48 117q-7 9 -17 11h-317q-10 -2 -17 -11zM1408 1120v-64q0 -14 -9 -23t-23 -9h-96v-948q0 -83 -47 -143.5t-113 -60.5h-832q-66 0 -113 58.5t-47 141.5v952h-96q-14 0 -23 9t-9 23v64q0 14 9 23t23 9h309l70 167 q15 37 54 63t79 26h320q40 0 79 -26t54 -63l70 -167h309q14 0 23 -9t9 -23z"/></svg></a></div></td></tr><tr><td class="g">员工账户</td><td>1</td><td>啊眯</td><td>爱已成舟888</td><td>爱已成舟</td><td>13555558888</td><td></td><td class="tg"><svg class="fa" width="27.43" height="24" viewBox="0 -1536 2048 1792" style="fill:#18bc9c;"><path transform="scale(1,-1)" d="M0 640q0 130 51 248.5t136.5 204t204 136.5t248.5 51h768q130 0 248.5 -51t204 -136.5t136.5 -204t51 -248.5t-51 -248.5t-136.5 -204t-204 -136.5t-248.5 -51h-768q-130 0 -248.5 51t-204 136.5t-136.5 204t-51 248.5zM1408 128q104 0 198.5 40.5t163.5 109.5 t109.5 163.5t40.5 198.5t-40.5 198.5t-109.5 163.5t-163.5 109.5t-198.5 40.5t-198.5 -40.5t-163.5 -109.5t-109.5 -163.5t-40.5 -198.5t40.5 -198.5t109.5 -163.5t163.5 -109.5t198.5 -40.5z"/></svg></td><td>0.00</td><td>0.00</td><td>0.00</td><td>2023-01-17 12:49:25</td><td>139.159.212.126</td><td>139.159.212.126</td><td>2023-01-17 12:49:25</td><td class="g">正常</td><td>-</td><td class="ops"><div class="opsw"><a class="bx b-info"><svg class="fa" width="10.29" height="12" viewBox="0 -1536 1536 1792" style="fill:#fff;"><path transform="scale(1,-1)" d="M1280 576v128q0 26 -19 45t-45 19h-320v320q0 26 -19 45t-45 19h-128q-26 0 -45 -19t-19 -45v-320h-320q-26 0 -45 -19t-19 -45v-128q0 -26 19 -45t45 -19h320v-320q0 -26 19 -45t45 -19h128q26 0 45 19t19 45v320h320q26 0 45 19t19 45zM1536 1120v-960 q0 -119 -84.5 -203.5t-203.5 -84.5h-960q-119 0 -203.5 84.5t-84.5 203.5v960q0 119 84.5 203.5t203.5 84.5h960q119 0 203.5 -84.5t84.5 -203.5z"/></svg></a><a class="bx b-info m3"><svg class="fa" width="10.29" height="12" viewBox="0 -1536 1536 1792" style="fill:#fff;"><path transform="scale(1,-1)" d="M1280 576v128q0 26 -19 45t-45 19h-896q-26 0 -45 -19t-19 -45v-128q0 -26 19 -45t45 -19h896q26 0 45 19t19 45zM1536 1120v-960q0 -119 -84.5 -203.5t-203.5 -84.5h-960q-119 0 -203.5 84.5t-84.5 203.5v960q0 119 84.5 203.5t203.5 84.5h960q119 0 203.5 -84.5 t84.5 -203.5z"/></svg></a><a class="bx b-info w24"><svg class="fa" width="12.00" height="12" viewBox="0 -1536 1792 1792" style="fill:#fff;"><path transform="scale(1,-1)" d="M1664 896q53 0 90.5 -37.5t37.5 -90.5t-37.5 -90.5t-90.5 -37.5v-384q0 -52 -38 -90t-90 -38q-417 347 -812 380q-58 -19 -91 -66t-31 -100.5t40 -92.5q-20 -33 -23 -65.5t6 -58t33.5 -55t48 -50t61.5 -50.5q-29 -58 -111.5 -83t-168.5 -11.5t-132 55.5q-7 23 -29.5 87.5 t-32 94.5t-23 89t-15 101t3.5 98.5t22 110.5h-122q-66 0 -113 47t-47 113v192q0 66 47 113t113 47h480q435 0 896 384q52 0 90 -38t38 -90v-384zM1536 292v954q-394 -302 -768 -343v-270q377 -42 768 -341z"/></svg></a><a class="bx b-danger"><svg class="fa" width="10.29" height="12" viewBox="0 -1536 1536 1792" style="fill:#fff;"><path transform="scale(1,-1)" d="M1097 457l-146 -146q-10 -10 -23 -10t-23 10l-137 137l-137 -137q-10 -10 -23 -10t-23 10l-146 146q-10 10 -10 23t10 23l137 137l-137 137q-10 10 -10 23t10 23l146 146q10 10 23 10t23 -10l137 -137l137 137q10 10 23 10t23 -10l146 -146q10 -10 10 -23t-10 -23 l-137 -137l137 -137q10 -10 10 -23t-10 -23zM1312 640q0 148 -73 273t-198 198t-273 73t-273 -73t-198 -198t-73 -273t73 -273t198 -198t273 -73t273 73t198 198t73 273zM1536 640q0 -209 -103 -385.5t-279.5 -279.5t-385.5 -103t-385.5 103t-279.5 279.5t-103 385.5 t103 385.5t279.5 279.5t385.5 103t385.5 -103t279.5 -279.5t103 -385.5z"/></svg></a><a class="bx b-success"><svg class="fa" width="10.29" height="12" viewBox="0 -1536 1536 1792" style="fill:#fff;"><path transform="scale(1,-1)" d="M363 0l91 91l-235 235l-91 -91v-107h128v-128h107zM886 928q0 22 -22 22q-10 0 -17 -7l-542 -542q-7 -7 -7 -17q0 -22 22 -22q10 0 17 7l542 542q7 7 7 17zM832 1120l416 -416l-832 -832h-416v416zM1515 1024q0 -53 -37 -90l-166 -166l-416 416l166 165q36 38 90 38 q53 0 91 -38l235 -234q37 -39 37 -91z"/></svg></a><a class="bx b-danger w21"><svg class="fa" width="9.43" height="12" viewBox="0 -1536 1408 1792" style="fill:#fff;"><path transform="scale(1,-1)" d="M512 160v704q0 14 -9 23t-23 9h-64q-14 0 -23 -9t-9 -23v-704q0 -14 9 -23t23 -9h64q14 0 23 9t9 23zM768 160v704q0 14 -9 23t-23 9h-64q-14 0 -23 -9t-9 -23v-704q0 -14 9 -23t23 -9h64q14 0 23 9t9 23zM1024 160v704q0 14 -9 23t-23 9h-64q-14 0 -23 -9t-9 -23v-704 q0 -14 9 -23t23 -9h64q14 0 23 9t9 23zM480 1152h448l-48 117q-7 9 -17 11h-317q-10 -2 -17 -11zM1408 1120v-64q0 -14 -9 -23t-23 -9h-96v-948q0 -83 -47 -143.5t-113 -60.5h-832q-66 0 -113 58.5t-47 141.5v952h-96q-14 0 -23 9t-9 23v64q0 14 9 23t23 9h309l70 167 q15 37 54 63t79 26h320q40 0 79 -26t54 -63l70 -167h309q14 0 23 -9t9 -23z"/></svg></a></div></td></tr><tr><td class="">普通会员</td><td>1</td><td>啊眯</td><td>徐婷婷888</td><td>C夫人</td><td>15371222428</td><td></td><td class="tg"><svg class="fa" width="27.43" height="24" viewBox="0 -1536 2048 1792" style="fill:#18bc9c;"><path transform="scale(1,-1)" d="M0 640q0 130 51 248.5t136.5 204t204 136.5t248.5 51h768q130 0 248.5 -51t204 -136.5t136.5 -204t51 -248.5t-51 -248.5t-136.5 -204t-204 -136.5t-248.5 -51h-768q-130 0 -248.5 51t-204 136.5t-136.5 204t-51 248.5zM1408 128q104 0 198.5 40.5t163.5 109.5 t109.5 163.5t40.5 198.5t-40.5 198.5t-109.5 163.5t-163.5 109.5t-198.5 40.5t-198.5 -40.5t-163.5 -109.5t-109.5 -163.5t-40.5 -198.5t40.5 -198.5t109.5 -163.5t163.5 -109.5t198.5 -40.5z"/></svg></td><td>0.00</td><td>0.00</td><td>0.00</td><td>2023-01-16 21:44:22</td><td>180.126.203.189</td><td>180.126.203.189</td><td>2023-01-16 21:44:22</td><td class="g">正常</td><td>-</td><td class="ops"><div class="opsw"><a class="bx b-info"><svg class="fa" width="10.29" height="12" viewBox="0 -1536 1536 1792" style="fill:#fff;"><path transform="scale(1,-1)" d="M1280 576v128q0 26 -19 45t-45 19h-320v320q0 26 -19 45t-45 19h-128q-26 0 -45 -19t-19 -45v-320h-320q-26 0 -45 -19t-19 -45v-128q0 -26 19 -45t45 -19h320v-320q0 -26 19 -45t45 -19h128q26 0 45 19t19 45v320h320q26 0 45 19t19 45zM1536 1120v-960 q0 -119 -84.5 -203.5t-203.5 -84.5h-960q-119 0 -203.5 84.5t-84.5 203.5v960q0 119 84.5 203.5t203.5 84.5h960q119 0 203.5 -84.5t84.5 -203.5z"/></svg></a><a class="bx b-info m3"><svg class="fa" width="10.29" height="12" viewBox="0 -1536 1536 1792" style="fill:#fff;"><path transform="scale(1,-1)" d="M1280 576v128q0 26 -19 45t-45 19h-896q-26 0 -45 -19t-19 -45v-128q0 -26 19 -45t45 -19h896q26 0 45 19t19 45zM1536 1120v-960q0 -119 -84.5 -203.5t-203.5 -84.5h-960q-119 0 -203.5 84.5t-84.5 203.5v960q0 119 84.5 203.5t203.5 84.5h960q119 0 203.5 -84.5 t84.5 -203.5z"/></svg></a><a class="bx b-info w24"><svg class="fa" width="12.00" height="12" viewBox="0 -1536 1792 1792" style="fill:#fff;"><path transform="scale(1,-1)" d="M1664 896q53 0 90.5 -37.5t37.5 -90.5t-37.5 -90.5t-90.5 -37.5v-384q0 -52 -38 -90t-90 -38q-417 347 -812 380q-58 -19 -91 -66t-31 -100.5t40 -92.5q-20 -33 -23 -65.5t6 -58t33.5 -55t48 -50t61.5 -50.5q-29 -58 -111.5 -83t-168.5 -11.5t-132 55.5q-7 23 -29.5 87.5 t-32 94.5t-23 89t-15 101t3.5 98.5t22 110.5h-122q-66 0 -113 47t-47 113v192q0 66 47 113t113 47h480q435 0 896 384q52 0 90 -38t38 -90v-384zM1536 292v954q-394 -302 -768 -343v-270q377 -42 768 -341z"/></svg></a><a class="bx b-danger"><svg class="fa" width="10.29" height="12" viewBox="0 -1536 1536 1792" style="fill:#fff;"><path transform="scale(1,-1)" d="M1097 457l-146 -146q-10 -10 -23 -10t-23 10l-137 137l-137 -137q-10 -10 -23 -10t-23 10l-146 146q-10 10 -10 23t10 23l137 137l-137 137q-10 10 -10 23t10 23l146 146q10 10 23 10t23 -10l137 -137l137 137q10 10 23 10t23 -10l146 -146q10 -10 10 -23t-10 -23 l-137 -137l137 -137q10 -10 10 -23t-10 -23zM1312 640q0 148 -73 273t-198 198t-273 73t-273 -73t-198 -198t-73 -273t73 -273t198 -198t273 -73t273 73t198 198t73 273zM1536 640q0 -209 -103 -385.5t-279.5 -279.5t-385.5 -103t-385.5 103t-279.5 279.5t-103 385.5 t103 385.5t279.5 279.5t385.5 103t385.5 -103t279.5 -279.5t103 -385.5z"/></svg></a><a class="bx b-success"><svg class="fa" width="10.29" height="12" viewBox="0 -1536 1536 1792" style="fill:#fff;"><path transform="scale(1,-1)" d="M363 0l91 91l-235 235l-91 -91v-107h128v-128h107zM886 928q0 22 -22 22q-10 0 -17 -7l-542 -542q-7 -7 -7 -17q0 -22 22 -22q10 0 17 7l542 542q7 7 7 17zM832 1120l416 -416l-832 -832h-416v416zM1515 1024q0 -53 -37 -90l-166 -166l-416 416l166 165q36 38 90 38 q53 0 91 -38l235 -234q37 -39 37 -91z"/></svg></a><a class="bx b-danger w21"><svg class="fa" width="9.43" height="12" viewBox="0 -1536 1408 1792" style="fill:#fff;"><path transform="scale(1,-1)" d="M512 160v704q0 14 -9 23t-23 9h-64q-14 0 -23 -9t-9 -23v-704q0 -14 9 -23t23 -9h64q14 0 23 9t9 23zM768 160v704q0 14 -9 23t-23 9h-64q-14 0 -23 -9t-9 -23v-704q0 -14 9 -23t23 -9h64q14 0 23 9t9 23zM1024 160v704q0 14 -9 23t-23 9h-64q-14 0 -23 -9t-9 -23v-704 q0 -14 9 -23t23 -9h64q14 0 23 9t9 23zM480 1152h448l-48 117q-7 9 -17 11h-317q-10 -2 -17 -11zM1408 1120v-64q0 -14 -9 -23t-23 -9h-96v-948q0 -83 -47 -143.5t-113 -60.5h-832q-66 0 -113 58.5t-47 141.5v952h-96q-14 0 -23 9t-9 23v64q0 14 9 23t23 9h309l70 167 q15 37 54 63t79 26h320q40 0 79 -26t54 -63l70 -167h309q14 0 23 -9t9 -23z"/></svg></a></div></td></tr><tr><td class="">普通会员</td><td>1</td><td>啊眯</td><td>刘建波888</td><td>合富辉煌</td><td>18102766218</td><td></td><td class="tg"><svg class="fa" width="27.43" height="24" viewBox="0 -1536 2048 1792" style="fill:#d2d6de;"><path transform="translate(2048,0) scale(-1,-1)" d="M0 640q0 130 51 248.5t136.5 204t204 136.5t248.5 51h768q130 0 248.5 -51t204 -136.5t136.5 -204t51 -248.5t-51 -248.5t-136.5 -204t-204 -136.5t-248.5 -51h-768q-130 0 -248.5 51t-204 136.5t-136.5 204t-51 248.5zM1408 128q104 0 198.5 40.5t163.5 109.5 t109.5 163.5t40.5 198.5t-40.5 198.5t-109.5 163.5t-163.5 109.5t-198.5 40.5t-198.5 -40.5t-163.5 -109.5t-109.5 -163.5t-40.5 -198.5t40.5 -198.5t109.5 -163.5t163.5 -109.5t198.5 -40.5z"/></svg></td><td>3000.00</td><td>0.00</td><td>3000.00</td><td>2023-01-16 16:45:38</td><td>113.111.215.161</td><td>113.111.215.161</td><td>2023-01-16 16:45:38</td><td class="g">正常</td><td>-</td><td class="ops"><div class="opsw"><a class="bx b-info"><svg class="fa" width="10.29" height="12" viewBox="0 -1536 1536 1792" style="fill:#fff;"><path transform="scale(1,-1)" d="M1280 576v128q0 26 -19 45t-45 19h-320v320q0 26 -19 45t-45 19h-128q-26 0 -45 -19t-19 -45v-320h-320q-26 0 -45 -19t-19 -45v-128q0 -26 19 -45t45 -19h320v-320q0 -26 19 -45t45 -19h128q26 0 45 19t19 45v320h320q26 0 45 19t19 45zM1536 1120v-960 q0 -119 -84.5 -203.5t-203.5 -84.5h-960q-119 0 -203.5 84.5t-84.5 203.5v960q0 119 84.5 203.5t203.5 84.5h960q119 0 203.5 -84.5t84.5 -203.5z"/></svg></a><a class="bx b-info m3"><svg class="fa" width="10.29" height="12" viewBox="0 -1536 1536 1792" style="fill:#fff;"><path transform="scale(1,-1)" d="M1280 576v128q0 26 -19 45t-45 19h-896q-26 0 -45 -19t-19 -45v-128q0 -26 19 -45t45 -19h896q26 0 45 19t19 45zM1536 1120v-960q0 -119 -84.5 -203.5t-203.5 -84.5h-960q-119 0 -203.5 84.5t-84.5 203.5v960q0 119 84.5 203.5t203.5 84.5h960q119 0 203.5 -84.5 t84.5 -203.5z"/></svg></a><a class="bx b-info w24"><svg class="fa" width="12.00" height="12" viewBox="0 -1536 1792 1792" style="fill:#fff;"><path transform="scale(1,-1)" d="M1664 896q53 0 90.5 -37.5t37.5 -90.5t-37.5 -90.5t-90.5 -37.5v-384q0 -52 -38 -90t-90 -38q-417 347 -812 380q-58 -19 -91 -66t-31 -100.5t40 -92.5q-20 -33 -23 -65.5t6 -58t33.5 -55t48 -50t61.5 -50.5q-29 -58 -111.5 -83t-168.5 -11.5t-132 55.5q-7 23 -29.5 87.5 t-32 94.5t-23 89t-15 101t3.5 98.5t22 110.5h-122q-66 0 -113 47t-47 113v192q0 66 47 113t113 47h480q435 0 896 384q52 0 90 -38t38 -90v-384zM1536 292v954q-394 -302 -768 -343v-270q377 -42 768 -341z"/></svg></a><a class="bx b-danger"><svg class="fa" width="10.29" height="12" viewBox="0 -1536 1536 1792" style="fill:#fff;"><path transform="scale(1,-1)" d="M1097 457l-146 -146q-10 -10 -23 -10t-23 10l-137 137l-137 -137q-10 -10 -23 -10t-23 10l-146 146q-10 10 -10 23t10 23l137 137l-137 137q-10 10 -10 23t10 23l146 146q10 10 23 10t23 -10l137 -137l137 137q10 10 23 10t23 -10l146 -146q10 -10 10 -23t-10 -23 l-137 -137l137 -137q10 -10 10 -23t-10 -23zM1312 640q0 148 -73 273t-198 198t-273 73t-273 -73t-198 -198t-73 -273t73 -273t198 -198t273 -73t273 73t198 198t73 273zM1536 640q0 -209 -103 -385.5t-279.5 -279.5t-385.5 -103t-385.5 103t-279.5 279.5t-103 385.5 t103 385.5t279.5 279.5t385.5 103t385.5 -103t279.5 -279.5t103 -385.5z"/></svg></a><a class="bx b-success"><svg class="fa" width="10.29" height="12" viewBox="0 -1536 1536 1792" style="fill:#fff;"><path transform="scale(1,-1)" d="M363 0l91 91l-235 235l-91 -91v-107h128v-128h107zM886 928q0 22 -22 22q-10 0 -17 -7l-542 -542q-7 -7 -7 -17q0 -22 22 -22q10 0 17 7l542 542q7 7 7 17zM832 1120l416 -416l-832 -832h-416v416zM1515 1024q0 -53 -37 -90l-166 -166l-416 416l166 165q36 38 90 38 q53 0 91 -38l235 -234q37 -39 37 -91z"/></svg></a><a class="bx b-danger w21"><svg class="fa" width="9.43" height="12" viewBox="0 -1536 1408 1792" style="fill:#fff;"><path transform="scale(1,-1)" d="M512 160v704q0 14 -9 23t-23 9h-64q-14 0 -23 -9t-9 -23v-704q0 -14 9 -23t23 -9h64q14 0 23 9t9 23zM768 160v704q0 14 -9 23t-23 9h-64q-14 0 -23 -9t-9 -23v-704q0 -14 9 -23t23 -9h64q14 0 23 9t9 23zM1024 160v704q0 14 -9 23t-23 9h-64q-14 0 -23 -9t-9 -23v-704 q0 -14 9 -23t23 -9h64q14 0 23 9t9 23zM480 1152h448l-48 117q-7 9 -17 11h-317q-10 -2 -17 -11zM1408 1120v-64q0 -14 -9 -23t-23 -9h-96v-948q0 -83 -47 -143.5t-113 -60.5h-832q-66 0 -113 58.5t-47 141.5v952h-96q-14 0 -23 9t-9 23v64q0 14 9 23t23 9h309l70 167 q15 37 54 63t79 26h320q40 0 79 -26t54 -63l70 -167h309q14 0 23 -9t9 -23z"/></svg></a></div></td></tr><tr><td class="">普通会员</td><td>1</td><td>啊眯</td><td>phs</td><td>2621359951</td><td>13360613416</td><td></td><td class="tg"><svg class="fa" width="27.43" height="24" viewBox="0 -1536 2048 1792" style="fill:#18bc9c;"><path transform="scale(1,-1)" d="M0 640q0 130 51 248.5t136.5 204t204 136.5t248.5 51h768q130 0 248.5 -51t204 -136.5t136.5 -204t51 -248.5t-51 -248.5t-136.5 -204t-204 -136.5t-248.5 -51h-768q-130 0 -248.5 51t-204 136.5t-136.5 204t-51 248.5zM1408 128q104 0 198.5 40.5t163.5 109.5 t109.5 163.5t40.5 198.5t-40.5 198.5t-109.5 163.5t-163.5 109.5t-198.5 40.5t-198.5 -40.5t-163.5 -109.5t-109.5 -163.5t-40.5 -198.5t40.5 -198.5t109.5 -163.5t163.5 -109.5t198.5 -40.5z"/></svg></td><td>0.00</td><td>0.00</td><td>0.00</td><td>2023-01-16 16:13:43</td><td>120.239.197.208</td><td>120.239.197.208</td><td>2023-01-16 16:13:43</td><td class="g">正常</td><td>-</td><td class="ops"><div class="opsw"><a class="bx b-info"><svg class="fa" width="10.29" height="12" viewBox="0 -1536 1536 1792" style="fill:#fff;"><path transform="scale(1,-1)" d="M1280 576v128q0 26 -19 45t-45 19h-320v320q0 26 -19 45t-45 19h-128q-26 0 -45 -19t-19 -45v-320h-320q-26 0 -45 -19t-19 -45v-128q0 -26 19 -45t45 -19h320v-320q0 -26 19 -45t45 -19h128q26 0 45 19t19 45v320h320q26 0 45 19t19 45zM1536 1120v-960 q0 -119 -84.5 -203.5t-203.5 -84.5h-960q-119 0 -203.5 84.5t-84.5 203.5v960q0 119 84.5 203.5t203.5 84.5h960q119 0 203.5 -84.5t84.5 -203.5z"/></svg></a><a class="bx b-info m3"><svg class="fa" width="10.29" height="12" viewBox="0 -1536 1536 1792" style="fill:#fff;"><path transform="scale(1,-1)" d="M1280 576v128q0 26 -19 45t-45 19h-896q-26 0 -45 -19t-19 -45v-128q0 -26 19 -45t45 -19h896q26 0 45 19t19 45zM1536 1120v-960q0 -119 -84.5 -203.5t-203.5 -84.5h-960q-119 0 -203.5 84.5t-84.5 203.5v960q0 119 84.5 203.5t203.5 84.5h960q119 0 203.5 -84.5 t84.5 -203.5z"/></svg></a><a class="bx b-info w24"><svg class="fa" width="12.00" height="12" viewBox="0 -1536 1792 1792" style="fill:#fff;"><path transform="scale(1,-1)" d="M1664 896q53 0 90.5 -37.5t37.5 -90.5t-37.5 -90.5t-90.5 -37.5v-384q0 -52 -38 -90t-90 -38q-417 347 -812 380q-58 -19 -91 -66t-31 -100.5t40 -92.5q-20 -33 -23 -65.5t6 -58t33.5 -55t48 -50t61.5 -50.5q-29 -58 -111.5 -83t-168.5 -11.5t-132 55.5q-7 23 -29.5 87.5 t-32 94.5t-23 89t-15 101t3.5 98.5t22 110.5h-122q-66 0 -113 47t-47 113v192q0 66 47 113t113 47h480q435 0 896 384q52 0 90 -38t38 -90v-384zM1536 292v954q-394 -302 -768 -343v-270q377 -42 768 -341z"/></svg></a><a class="bx b-danger"><svg class="fa" width="10.29" height="12" viewBox="0 -1536 1536 1792" style="fill:#fff;"><path transform="scale(1,-1)" d="M1097 457l-146 -146q-10 -10 -23 -10t-23 10l-137 137l-137 -137q-10 -10 -23 -10t-23 10l-146 146q-10 10 -10 23t10 23l137 137l-137 137q-10 10 -10 23t10 23l146 146q10 10 23 10t23 -10l137 -137l137 137q10 10 23 10t23 -10l146 -146q10 -10 10 -23t-10 -23 l-137 -137l137 -137q10 -10 10 -23t-10 -23zM1312 640q0 148 -73 273t-198 198t-273 73t-273 -73t-198 -198t-73 -273t73 -273t198 -198t273 -73t273 73t198 198t73 273zM1536 640q0 -209 -103 -385.5t-279.5 -279.5t-385.5 -103t-385.5 103t-279.5 279.5t-103 385.5 t103 385.5t279.5 279.5t385.5 103t385.5 -103t279.5 -279.5t103 -385.5z"/></svg></a><a class="bx b-success"><svg class="fa" width="10.29" height="12" viewBox="0 -1536 1536 1792" style="fill:#fff;"><path transform="scale(1,-1)" d="M363 0l91 91l-235 235l-91 -91v-107h128v-128h107zM886 928q0 22 -22 22q-10 0 -17 -7l-542 -542q-7 -7 -7 -17q0 -22 22 -22q10 0 17 7l542 542q7 7 7 17zM832 1120l416 -416l-832 -832h-416v416zM1515 1024q0 -53 -37 -90l-166 -166l-416 416l166 165q36 38 90 38 q53 0 91 -38l235 -234q37 -39 37 -91z"/></svg></a><a class="bx b-danger w21"><svg class="fa" width="9.43" height="12" viewBox="0 -1536 1408 1792" style="fill:#fff;"><path transform="scale(1,-1)" d="M512 160v704q0 14 -9 23t-23 9h-64q-14 0 -23 -9t-9 -23v-704q0 -14 9 -23t23 -9h64q14 0 23 9t9 23zM768 160v704q0 14 -9 23t-23 9h-64q-14 0 -23 -9t-9 -23v-704q0 -14 9 -23t23 -9h64q14 0 23 9t9 23zM1024 160v704q0 14 -9 23t-23 9h-64q-14 0 -23 -9t-9 -23v-704 q0 -14 9 -23t23 -9h64q14 0 23 9t9 23zM480 1152h448l-48 117q-7 9 -17 11h-317q-10 -2 -17 -11zM1408 1120v-64q0 -14 -9 -23t-23 -9h-96v-948q0 -83 -47 -143.5t-113 -60.5h-832q-66 0 -113 58.5t-47 141.5v952h-96q-14 0 -23 9t-9 23v64q0 14 9 23t23 9h309l70 167 q15 37 54 63t79 26h320q40 0 79 -26t54 -63l70 -167h309q14 0 23 -9t9 -23z"/></svg></a></div></td></tr></tbody></table></div></div>
  <div class="hscroll"><i class="al"></i><i class="thumb"></i><i class="ar"></i></div>
  <div class="pinfo">显示第 1 到第 10 条记录，总共 21 条记录 每页显示 <span class="psize">10 <i class="caretup"></i></span> 条记录</div>
  <div class="pager">
    <a style="left:0;width:64.5px;border-radius:3px 0 0 3px">上一页</a>
    <a class="cur" style="left:64px;width:34px">1</a>
    <a style="left:97.5px;width:32.5px">2</a>
    <a style="left:129px;width:33px">3</a>
    <a style="left:161px;width:65px;border-radius:0 3px 3px 0">下一页</a>
  </div>
  <div class="jinput"></div>
  <a class="jbtn">跳转</a>
</div>

</body></html>
